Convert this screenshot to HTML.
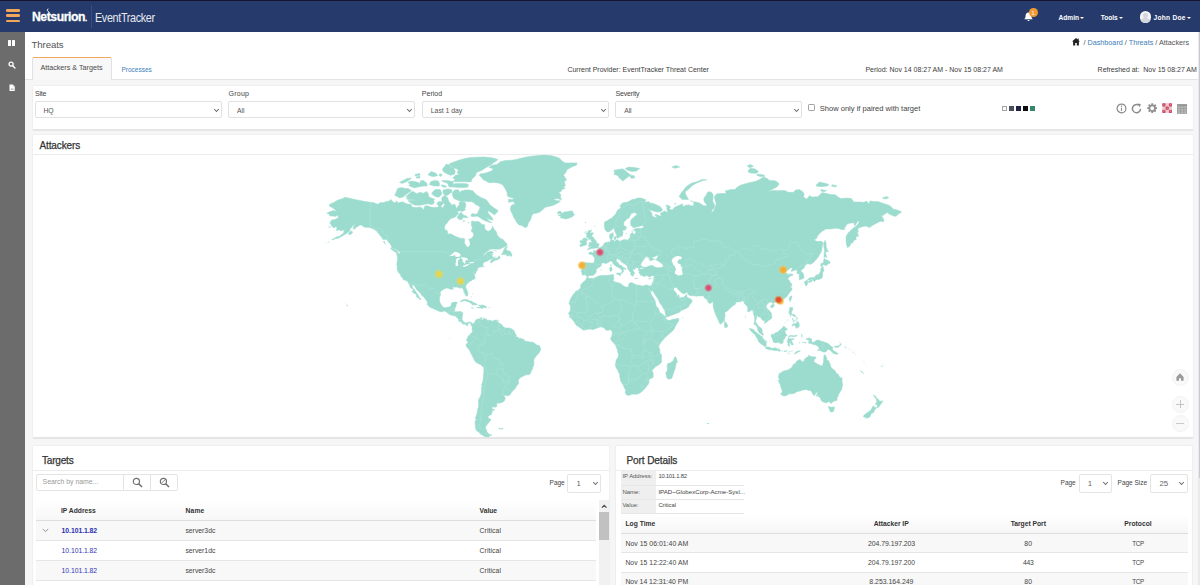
<!DOCTYPE html>
<html lang="en"><head>
<meta charset="utf-8">
<title>EventTracker - Threats</title>
<style>
*{box-sizing:border-box;margin:0;padding:0}
html,body{width:1200px;height:585px;overflow:hidden;background:#f6f6f6;font-family:"Liberation Sans",sans-serif;color:#444;}
.abs{position:absolute}
#nav{left:0;top:0;width:1200px;height:32px;background:#263b6b;border-top:1.5px solid #17142e}
#side{left:0;top:32px;width:25px;height:553px;background:#6c6c6c}
#head{left:25px;top:32px;width:1175px;height:48px;background:#fff;border-bottom:1px solid #e4e4e4}
.t{position:absolute;white-space:nowrap;line-height:1;font-size:7.6px;color:#444}
.b{font-weight:bold}
.lnk{color:#3d7db8}
.panel{position:absolute;background:#fff;border:1px solid #efefef;border-bottom:2px solid #e5e5e5;border-radius:2px}
.sel{position:absolute;background:#fff;border:1px solid #e1e1e1;border-radius:2px}
.chev{position:absolute;width:7px;height:5px}
.bar{position:absolute;left:5.5px;width:14.5px;height:2.6px;border-radius:1.2px;background:#f2a65c}
.row{position:absolute;left:0;height:20px}
.hl{position:absolute;height:1px;background:#e4e4e4}
.sq{position:absolute;top:105.9px;width:5px;height:5.4px}
.circ{position:absolute;width:17px;height:17px;border-radius:50%;background:#f9f9f9;border:1px solid #f3f3f3}
</style>
</head>
<body>
<!-- NAVBAR -->
<div id="nav" class="abs">
  <div class="bar" style="top:8.3px"></div>
  <div class="bar" style="top:13.3px"></div>
  <div class="bar" style="top:18.6px"></div>
  <div class="t b" style="left: 31.5px; top: 10.4px; font-size: 12.4px; color: rgb(255, 255, 255); letter-spacing: -0.45px; -webkit-text-stroke: 0.3px rgb(255, 255, 255); transform: scaleX(0.9845); transform-origin: 0px 0px;">Netsurion<span style="font-size:8px">.</span></div>
  <svg class="abs" style="left:45.6px;top:6.6px" width="6" height="6" viewBox="0 0 6 6"><path d="M2.2 0.6 L1.2 2.2 L3 4.4" fill="none" stroke="#fff" stroke-width="0.9"></path></svg>
  <div class="abs" style="left:91px;top:4px;width:1px;height:23px;background:#3a4f7e"></div>
  <div class="t" style="left: 94.8px; top: 9.6px; font-size: 13.6px; color: rgb(230, 234, 242); letter-spacing: -0.4px; transform: scaleX(0.7917); transform-origin: 0px 0px;">EventTracker</div>
  <!-- bell -->
  <svg class="abs" style="left:1023.5px;top:10.5px" width="9" height="10" viewBox="0 0 9 10"><path d="M4.5 0.6c-1.9 0-2.9 1.5-2.9 3.2 0 1.9-.6 2.7-1.3 3.4h8.4c-.7-.7-1.3-1.5-1.3-3.4 0-1.7-1-3.2-2.9-3.2zM3.4 7.9a1.1 1.1 0 0 0 2.2 0z" fill="#fff"></path></svg>
  <div class="abs" style="left:1028.5px;top:7.3px;width:9px;height:9px;border-radius:50%;background:#f19a35"></div>
  <div class="t" style="left:1031.6px;top:9.5px;font-size:5.5px;color:#fff">1</div>
  <div class="t b" style="left: 1058.5px; top: 13.7px; font-size: 6.59px; color: rgb(255, 255, 255); letter-spacing: 0.006px;">Admin</div>
  <div class="abs" style="left:1080.3px;top:16.2px;border:2.3px solid transparent;border-top:2.6px solid #fff;border-bottom:0"></div>
  <div class="t b" style="left: 1100.8px; top: 13.7px; font-size: 6.59px; color: rgb(255, 255, 255); letter-spacing: -0.052px;">Tools</div>
  <div class="abs" style="left:1119.4px;top:16.2px;border:2.3px solid transparent;border-top:2.6px solid #fff;border-bottom:0"></div>
  <div class="abs" style="left:1139.8px;top:10.2px;width:11.6px;height:11.6px;border-radius:50%;background:#f4f4f6;overflow:hidden">
     <div class="abs" style="left:3.6px;top:2px;width:4.4px;height:4.4px;border-radius:50%;background:#d4d6de"></div>
     <div class="abs" style="left:1.6px;top:7px;width:8.4px;height:7px;border-radius:50%;background:#d4d6de"></div>
  </div>
  <div class="t b" style="left: 1153.6px; top: 13.7px; font-size: 6.59px; color: rgb(255, 255, 255); letter-spacing: 0.254px;">John Doe</div>
  <div class="abs" style="left:1186.7px;top:16.2px;border:2.3px solid transparent;border-top:2.6px solid #fff;border-bottom:0"></div>
</div>
<!-- SIDEBAR -->
<div id="side" class="abs">
  <div class="abs" style="left:8.4px;top:8.3px;width:3px;height:6.2px;background:#fff;border-radius:.5px"></div>
  <div class="abs" style="left:12.2px;top:8.3px;width:3px;height:6.2px;background:#fff;border-radius:.5px"></div>
  <svg class="abs" style="left:7.9px;top:29.2px" width="8" height="8" viewBox="0 0 9 9"><circle cx="3.5" cy="3.5" r="2.3" fill="none" stroke="#fff" stroke-width="1.4"></circle><path d="M5.3 5.3L7.8 7.8" stroke="#fff" stroke-width="1.6" stroke-linecap="round"></path></svg>
  <svg class="abs" style="left:8.8px;top:51.6px" width="6.6" height="7.6" viewBox="0 0 8 9"><path d="M0.6 0.4h4l2.4 2.4v5.8h-6.4z" fill="#fff"></path><path d="M4.4 0.4v2.6h2.6" fill="#cfcfcf"></path><path d="M2 6.5l1.3-1.6 1 1 .8-.6 1 1.4z" fill="#8a8a8a"></path></svg>
</div>
<!-- HEADER (white) -->
<div id="head" class="abs"></div>
<div class="t" style="left: 31.5px; top: 39.68px; font-size: 9.63px; color: rgb(85, 85, 85); letter-spacing: -0.093px;">Threats</div>
<!-- breadcrumb -->
<svg class="abs" style="left:1072px;top:38.3px" width="8" height="7.4" viewBox="0 0 8 7.4"><path d="M4 0L0 3.6h1.1v3.8h2.1V4.9h1.6v2.5h2.1V3.6H8L6.7 2.4V.6H5.7v.9z" fill="#222"></path></svg>
<div class="t" style="left: 1083.4px; top: 38.93px; font-size: 7.24px; color: rgb(85, 85, 85); letter-spacing: 0.001px;">/ <span class="lnk">Dashboard</span> / <span class="lnk">Threats</span> / Attackers</div>
<!-- tabs -->
<div class="abs" style="left:31.5px;top:57px;width:80px;height:23px;background:#f8f8f8;border:1px solid #e2e2e2;border-top:1.3px solid #f1a85e;border-bottom:0;border-radius:2px 2px 0 0"></div>
<div class="t" style="left: 40.4px; top: 65.36px; font-size: 7.18px; color: rgb(74, 74, 74); letter-spacing: 0.002px;">Attackers &amp; Targets</div>
<div class="t lnk" style="left: 121.4px; top: 66.79px; font-size: 6.51px; letter-spacing: 0.005px;">Processes</div>
<div class="t" style="left: 567.4px; top: 66.1px; font-size: 7px; color: rgb(60, 60, 60); letter-spacing: -0.003px;">Current Provider: EventTracker Threat Center</div>
<div class="t" style="left: 865.4px; top: 66.1px; font-size: 7px; color: rgb(60, 60, 60); letter-spacing: -0.006px;">Period: Nov 14 08:27 AM - Nov 15 08:27 AM</div>
<div class="t" style="left: 1097.6px; top: 66.1px; font-size: 7px; color: rgb(60, 60, 60); letter-spacing: -0.014px;">Refreshed at:&nbsp; Nov 15 08:27 AM</div>

<!-- FILTER PANEL -->
<div class="panel" style="left:31.5px;top:85.4px;width:1162px;height:46px"></div>
<div class="t" style="left: 35px; top: 90.19px; font-size: 7.03px; letter-spacing: -0.198px;">Site</div>
<div class="sel" style="left:35px;top:101.2px;width:187px;height:17.3px"></div>
<div class="t" style="left: 43.4px; top: 107.79px; font-size: 6.83px; color: rgb(85, 85, 85); letter-spacing: 0px;">HQ</div>
<div class="t" style="left: 228.6px; top: 90.19px; font-size: 7.03px; letter-spacing: 0.2px;">Group</div>
<div class="sel" style="left:228.4px;top:101.2px;width:187px;height:17.3px"></div>
<div class="t" style="left: 237px; top: 107.79px; font-size: 6.83px; color: rgb(85, 85, 85); letter-spacing: -0.098px;">All</div>
<div class="t" style="left: 421.8px; top: 90.19px; font-size: 7.03px; letter-spacing: 0.003px;">Period</div>
<div class="sel" style="left:421.6px;top:101.2px;width:187.4px;height:17.3px"></div>
<div class="t" style="left: 430.8px; top: 107.79px; font-size: 6.83px; color: rgb(85, 85, 85); letter-spacing: -0.002px;">Last 1 day</div>
<div class="t" style="left: 615.4px; top: 90.19px; font-size: 7.03px; letter-spacing: -0.168px;">Severity</div>
<div class="sel" style="left:615.2px;top:101.2px;width:187px;height:17.3px"></div>
<div class="t" style="left: 624.2px; top: 107.79px; font-size: 6.83px; color: rgb(85, 85, 85); letter-spacing: -0.098px;">All</div>
<svg class="chev" style="left:212.5px;top:108.3px" viewBox="0 0 7 5"><path d="M1.2 1l2.3 2.5L5.8 1" fill="none" stroke="#6a6a6a" stroke-width="1.05"></path></svg>
<svg class="chev" style="left:406px;top:108.3px" viewBox="0 0 7 5"><path d="M1.2 1l2.3 2.5L5.8 1" fill="none" stroke="#6a6a6a" stroke-width="1.05"></path></svg>
<svg class="chev" style="left:599.5px;top:108.3px" viewBox="0 0 7 5"><path d="M1.2 1l2.3 2.5L5.8 1" fill="none" stroke="#6a6a6a" stroke-width="1.05"></path></svg>
<svg class="chev" style="left:793px;top:108.3px" viewBox="0 0 7 5"><path d="M1.2 1l2.3 2.5L5.8 1" fill="none" stroke="#6a6a6a" stroke-width="1.05"></path></svg>
<div class="abs" style="left:808.4px;top:104.4px;width:7px;height:7px;border:1px solid #a2a2a2;border-radius:1.2px;background:#fff"></div>
<div class="t" style="left: 819.8px; top: 104.68px; font-size: 7.54px; color: rgb(68, 68, 68); letter-spacing: 0.001px;">Show only if paired with target</div>
<!-- colour squares -->
<div class="sq" style="left:1002.2px;background:#fff;border:.8px solid #a5a5a5"></div>
<div class="sq" style="left:1009.1px;background:#4b4f5b"></div>
<div class="sq" style="left:1016.1px;background:#1e2148"></div>
<div class="sq" style="left:1022.9px;background:#0d0d12"></div>
<div class="sq" style="left:1029.5px;background:#37876c"></div>
<!-- toolbar icons -->
<svg class="abs" style="left:1115.6px;top:103px" width="11" height="11" viewBox="0 0 11 11"><circle cx="5.5" cy="5.4" r="4.4" fill="none" stroke="#8b8b8b" stroke-width="1.25"></circle><path d="M5.5 4.7v3.1" stroke="#8b8b8b" stroke-width="1.2"></path><circle cx="5.5" cy="3.2" r=".75" fill="#8b8b8b"></circle></svg>
<svg class="abs" style="left:1130.8px;top:103px" width="11" height="11" viewBox="0 0 11 11"><path d="M9.6 5.9A4.1 4.1 0 1 1 7.7 2.2" fill="none" stroke="#8b8b8b" stroke-width="1.45"></path><path d="M6.4 0.5l3.5.5-1.2 3.3z" fill="#8b8b8b"></path></svg>
<svg class="abs" style="left:1146.7px;top:103.2px" width="10.4" height="10.4" viewBox="0 0 11 11"><circle cx="5.5" cy="5.5" r="3" fill="none" stroke="#8f8f8f" stroke-width="1.9"></circle><g stroke="#8f8f8f" stroke-width="1.9"><path d="M5.5 .3v2M5.5 8.7v2M.3 5.5h2M8.7 5.5h2M1.8 1.8l1.4 1.4M7.8 7.8l1.4 1.4M1.8 9.2l1.4-1.4M7.8 3.2l1.4-1.4"></path></g></svg>
<svg class="abs" style="left:1161.8px;top:102.8px" width="10.4" height="10.4" viewBox="0 0 11 11"><rect x=".2" y=".2" width="10.6" height="10.6" fill="#e6cdd2"></rect><g fill="#dc93a1"><rect x=".2" y=".2" width="3.6" height="3.6"></rect><rect x="7.2" y=".2" width="3.6" height="3.6"></rect><rect x=".2" y="7.2" width="3.6" height="3.6"></rect><rect x="7.2" y="7.2" width="3.6" height="3.6"></rect><rect x="3.7" y="3.7" width="3.6" height="3.6"></rect></g><g fill="none" stroke="#d2465f" stroke-width="1.1"><circle cx="2" cy="2" r="1.1"></circle><circle cx="9" cy="2" r="1.1"></circle><circle cx="2" cy="9" r="1.1"></circle><circle cx="9" cy="9" r="1.1"></circle><circle cx="5.5" cy="5.5" r="1.2"></circle></g></svg>
<svg class="abs" style="left:1177.1px;top:103.8px" width="10.2" height="9.8" viewBox="0 0 11 10.5"><rect x=".2" y=".2" width="10.6" height="10.1" fill="#bdbdbd"></rect><rect x=".2" y=".2" width="10.6" height="2.3" fill="#959595"></rect><g stroke="#9b9b9b" stroke-width=".9"><path d="M.2 4.9h10.6M.2 7.5h10.6M.6 .2v10.1M3.9 .2v10.1M7.3 .2v10.1M10.4 .2v10.1M.2 10h10.6"></path></g></svg>

<!-- ATTACKERS PANEL -->
<div class="panel" style="left:31.5px;top:134px;width:1162px;height:305px;overflow:hidden">
  <div class="hl" style="left:0;top:19.4px;width:1162px;background:#ececec"></div>
</div>
<div class="t" style="left: 39.4px; top: 140.9px; font-size: 10px; color: rgb(51, 51, 51); letter-spacing: -0.102px; -webkit-text-stroke: 0.25px rgb(51, 51, 51);">Attackers</div>
<svg class="abs" style="left:32.5px;top:155px" width="1160" height="282" viewBox="0 0 1160 282"><path d="M459.1 67.7L456.7 67.4L454.3 66.6L451.3 65.4L448.7 63.9L446.3 62.2L443.9 61.1L441.5 61.6L438.6 61.4L437.8 59.8L439.4 58.6L442.3 59.2L444.7 58.5L445.3 56.1L446.6 54.0L447.0 52.1L444.7 50.4L442.3 49.3L440.5 47.6L438.3 46.5L435.9 46.7L432.7 46.3L427.9 46.2L424.7 45.3L421.0 43.6L419.4 40.6L419.7 37.6L421.4 35.1L425.5 34.7L426.6 37.6L428.2 36.1L431.9 35.0L435.9 35.0L439.9 35.7L441.2 37.6L443.9 40.0L446.3 41.5L449.0 43.0L451.9 44.1L453.8 45.3L455.5 47.6L456.4 49.3L459.1 51.5L461.5 53.2L465.1 55.6L464.0 57.5L461.4 60.1L458.7 58.0L455.9 56.1L454.5 56.7L455.9 59.0L458.2 61.6L459.6 63.4L459.8 65.2L457.5 64.7L453.5 63.0L455.1 64.9L457.2 66.7ZM428.7 57.5L426.7 58.3L425.5 60.1L423.9 62.2L425.1 63.4L426.3 64.7L429.0 64.4L430.3 62.2L432.7 62.7L434.8 62.9L433.5 61.1L431.1 60.3L429.5 59.3ZM375.3 46.2L378.1 48.2L381.4 50.1L385.4 50.3L388.6 50.1L391.8 49.3L394.9 48.7L398.2 49.6L400.3 49.0L401.4 47.0L400.6 45.6L401.6 44.1L399.0 43.3L395.8 41.8L395.0 37.9L393.4 36.4L390.2 38.5L388.6 37.6L386.2 37.6L383.8 38.8L380.5 36.7L379.7 36.2L376.5 38.2L373.7 40.9L372.7 42.1L374.9 42.4L378.1 41.8L373.3 43.6L374.9 44.4L383.8 45.0L375.3 45.6ZM361.6 40.3L362.9 37.9L363.7 35.4L365.0 33.2L368.5 32.6L372.5 33.6L375.3 33.6L378.5 35.7L375.7 37.6L372.5 40.0L370.6 41.8L366.4 43.0L365.3 42.1L362.4 40.5ZM375.7 30.4L381.4 32.9L386.2 31.7L391.0 31.0L394.2 31.0L393.7 28.1L390.2 25.4L387.0 26.1L387.8 28.4L383.0 26.8L378.1 26.1L374.9 27.4L377.3 29.4ZM366.4 27.4L369.3 28.4L373.3 26.8L377.3 24.4L378.1 23.1L374.1 23.4L370.1 25.4ZM396.6 29.7L401.4 31.0L406.2 31.0L406.7 29.1L405.4 26.1L401.4 25.4L397.4 26.8ZM408.6 29.7L413.4 31.0L413.4 32.0L410.2 32.3L408.6 31.0ZM408.6 25.4L415.8 25.8L419.8 26.4L420.6 29.4L422.3 28.4L428.7 28.4L433.5 28.7L435.6 29.7L434.6 32.3L431.1 32.6L425.5 32.6L420.6 32.0L416.2 32.0L415.5 30.4L414.2 28.1L410.2 26.8ZM410.2 35.1L414.2 33.9L418.6 34.5L419.0 37.3L416.6 38.5L415.0 40.3L411.8 40.3L410.2 38.5L409.9 36.7ZM399.0 37.6L402.2 34.5L407.0 34.5L408.6 37.3L408.5 39.4L406.2 42.1L403.8 42.1L400.6 40.6L398.7 38.8ZM403.8 49.0L405.4 46.5L408.6 46.7L410.5 48.4L408.6 50.4L405.4 50.7ZM419.8 26.4L423.1 26.8L428.7 26.8L433.5 26.8L435.9 27.1L438.6 26.4L438.6 24.4L442.3 21.0L443.6 17.5L449.5 15.0L452.7 12.8L457.5 10.2L459.9 8.3L464.0 5.6L464.8 4.4L459.1 2.8L451.1 2.0L443.1 2.2L435.1 2.8L427.1 4.8L422.3 6.4L417.4 8.3L415.8 9.4L417.4 11.7L423.9 13.9L425.5 15.4L423.9 17.5L426.3 19.3L422.3 20.3L419.8 23.1L422.3 24.4ZM409.4 14.3L413.4 9.1L417.4 10.9L420.6 12.8L422.3 16.4L421.4 19.3L417.4 20.3L414.2 18.9L410.2 16.4ZM395.0 19.6L398.2 16.4L403.0 18.2L404.6 20.7L399.8 21.7L395.8 20.3ZM407.0 18.6L409.4 20.0L407.8 21.4L405.9 20.3ZM382.2 19.3L387.0 18.6L387.0 20.3L382.2 21.0ZM383.8 21.4L387.0 21.4L387.0 23.1L383.0 23.1ZM493.0 72.8L490.4 71.8L488.8 70.4L486.1 69.9L483.7 67.4L482.4 64.9L480.5 61.9L479.5 59.3L477.3 54.8L477.6 51.8L479.2 49.8L481.6 49.6L481.6 48.2L480.0 46.5L475.3 47.3L475.7 45.3L475.8 44.1L479.2 44.7L480.8 43.3L477.6 42.4L474.4 41.2L474.2 37.9L472.8 34.8L471.2 32.3L469.6 29.7L465.6 28.1L460.7 27.4L455.9 27.8L453.0 26.1L450.3 24.8L448.7 22.7L446.3 20.3L447.1 18.9L452.7 17.9L459.1 15.7L459.9 13.5L455.9 12.4L459.1 10.2L464.0 9.4L467.2 6.8L472.0 5.6L478.4 5.2L483.2 4.4L489.6 2.8L496.0 1.6L505.7 0.4L511.3 -0.2L518.5 0.8L523.3 2.0L526.5 3.2L529.7 6.4L532.1 7.9L539.3 7.9L544.2 7.9L543.4 10.2L539.3 11.7L536.1 13.5L533.7 15.0L532.9 17.5L530.5 20.3L532.1 22.4L533.7 25.1L531.3 26.4L531.8 28.4L532.4 30.4L530.5 32.3L532.4 33.2L528.9 34.5L528.1 36.4L525.7 37.6L528.1 39.7L527.3 41.8L528.6 44.7L524.1 43.6L520.1 44.4L523.3 45.6L527.6 45.9L525.7 47.6L522.5 49.3L519.3 50.7L515.3 51.5L512.1 52.3L509.7 54.8L506.5 57.2L503.3 58.3L500.0 58.8L498.4 61.4L498.1 63.7L496.8 65.7L495.2 68.4L494.6 70.9ZM524.1 58.5L525.2 56.7L527.3 56.0L529.2 58.5L531.0 56.9L533.7 56.8L537.4 55.9L540.0 56.4L540.0 58.0L541.7 59.6L539.7 61.6L536.9 62.8L533.2 63.9L530.5 63.4L527.2 62.8L528.1 61.6L524.9 60.2L528.1 59.8L527.3 58.8ZM427.1 146.7L428.2 145.6L430.0 144.8L431.4 144.5L433.2 144.5L434.8 144.8L436.4 145.8L438.3 145.9L439.7 147.1L441.5 147.9L443.1 148.6L444.5 149.4L443.1 150.0L441.2 149.8L438.8 150.0L439.6 149.0L438.0 148.6L437.5 148.1L435.9 147.0L434.3 146.4L433.2 146.1L431.7 145.8L429.8 146.1L428.7 146.6ZM444.0 152.5L444.4 152.0L446.3 152.4L447.4 152.2L446.6 151.3L445.7 150.0L447.6 150.2L449.5 150.0L451.3 150.4L452.2 151.0L453.2 151.5L453.8 152.1L453.2 152.8L451.3 152.4L450.2 152.8L448.9 153.8L448.2 153.0L446.5 152.9L445.0 153.0ZM468.3 99.6L469.7 97.8L470.4 95.7L471.5 93.4L472.5 91.9L474.4 91.3L473.6 93.0L472.5 94.7L474.1 94.9L475.2 96.1L476.9 95.9L477.6 97.2L478.2 97.4L477.1 98.6L478.6 98.4L479.0 99.8L478.2 101.5L476.9 101.0L476.5 99.8L475.2 101.0L473.7 101.0L474.1 99.8L472.0 99.6ZM357.5 93.1L359.2 93.3L362.4 94.7L364.5 96.3L365.5 97.9L363.4 97.7L361.6 96.7L360.2 95.5L358.4 94.5ZM315.4 78.2L316.7 77.1L318.8 75.9L319.6 77.3L319.1 78.4L317.5 79.5L315.9 79.8ZM293.8 58.3L296.7 56.7L300.7 55.6L303.7 56.4L301.6 54.2L299.1 52.6L295.9 50.8L296.8 49.3L301.2 47.3L304.4 45.3L308.4 43.9L312.4 42.2L318.0 43.6L322.8 44.7L326.0 45.3L330.8 46.2L337.2 47.2L340.4 47.5L344.5 49.3L347.7 47.6L350.1 47.7L353.3 46.5L355.7 46.2L358.1 44.4L359.7 46.7L362.1 47.9L363.4 45.9L365.3 47.9L369.3 46.7L374.1 49.0L378.1 49.3L378.9 52.1L383.8 52.6L387.0 51.9L389.4 53.2L390.2 55.3L391.3 52.9L391.8 51.0L395.0 50.7L396.6 51.8L400.6 52.6L404.6 52.3L406.2 50.7L407.8 50.4L409.4 53.4L410.5 51.5L411.8 49.6L409.1 46.7L408.6 42.7L411.8 40.3L414.6 42.7L415.8 46.2L417.0 47.6L418.7 50.1L421.9 49.3L423.4 53.4L426.1 50.1L426.3 47.3L427.9 46.6L431.9 47.0L432.8 49.0L432.7 51.8L431.6 53.7L432.8 54.5L429.5 56.4L426.3 55.9L424.5 56.4L425.5 58.5L423.1 61.1L421.4 62.4L418.2 63.4L415.8 65.4L414.2 67.9L412.3 69.9L411.5 72.3L412.1 75.2L414.1 75.3L415.0 79.3L417.4 78.7L422.9 81.6L427.1 83.2L431.4 83.4L431.6 86.1L431.4 88.3L432.7 90.0L434.0 91.9L435.7 92.1L437.0 90.0L437.0 87.8L436.7 85.9L435.6 84.5L438.9 83.0L440.5 80.7L440.5 78.2L438.1 75.9L439.1 73.5L439.3 72.1L438.3 70.4L438.6 68.4L438.1 66.7L439.1 66.1L442.0 66.7L445.2 66.3L447.9 68.2L448.7 69.4L451.6 69.8L451.8 72.3L451.8 74.0L453.7 75.6L455.1 76.3L457.5 75.2L458.8 73.3L459.6 71.3L460.7 73.5L461.9 74.9L463.2 76.8L464.4 80.3L466.7 83.0L468.8 83.9L470.4 84.8L471.3 85.9L472.0 87.0L473.9 88.7L474.1 90.2L471.8 91.7L468.8 93.0L467.2 94.1L464.3 94.2L461.4 94.1L456.9 94.2L455.3 96.1L454.0 96.5L451.6 98.5L449.8 100.8L451.1 100.4L453.5 97.9L455.1 97.1L458.3 96.2L460.4 97.2L460.3 98.0L458.3 98.7L456.9 98.8L458.2 99.5L459.8 99.0L459.1 100.6L459.5 102.0L460.4 102.5L461.5 103.2L462.8 103.4L464.1 103.1L464.9 103.5L465.1 102.2L465.7 101.2L466.4 100.8L466.7 101.8L467.4 102.8L466.0 103.7L465.6 104.2L464.0 104.9L461.5 105.6L460.1 106.4L458.2 108.0L457.2 107.2L457.9 105.6L459.5 104.4L460.1 103.4L458.8 103.8L457.4 104.4L455.8 104.6L455.9 105.2L454.0 106.2L452.7 106.6L450.8 107.5L450.0 108.7L450.2 109.4L449.5 110.0L450.2 110.8L451.1 111.1L451.1 111.5L450.1 111.7L448.9 111.8L447.9 112.0L446.3 112.2L444.9 113.1L444.7 113.7L444.5 115.0L444.1 115.7L443.2 116.5L442.3 115.7L442.9 116.8L443.0 117.7L442.5 118.5L441.6 119.9L441.3 118.3L440.9 116.0L440.7 118.3L441.0 120.1L441.5 120.3L442.0 122.0L442.3 123.3L440.7 124.4L439.3 124.7L438.4 125.9L436.8 126.1L436.4 127.0L435.2 127.8L433.6 129.2L432.8 130.9L432.8 132.0L433.0 132.9L433.6 134.5L434.2 135.4L434.6 137.1L435.0 138.4L434.9 140.0L434.4 141.0L433.3 141.2L432.2 139.6L431.7 138.6L430.8 136.7L430.6 135.7L430.2 134.3L429.3 132.9L428.3 132.5L427.1 133.4L426.4 133.2L425.9 132.4L423.5 132.1L422.3 132.2L420.8 132.0L419.7 132.4L420.0 133.6L420.5 134.5L419.8 134.2L418.9 134.2L417.8 134.3L417.0 133.9L415.7 133.4L413.8 133.1L412.9 133.2L411.3 133.9L410.5 134.5L408.9 135.5L407.5 136.7L407.2 137.9L407.6 139.7L406.9 141.4L406.5 143.1L406.6 144.9L406.5 146.0L407.3 148.1L408.0 149.3L409.2 151.1L409.7 152.0L411.0 152.2L412.0 152.9L413.4 152.5L414.7 152.1L416.2 152.0L417.1 151.5L417.9 150.8L418.2 150.0L418.4 148.8L418.6 148.0L419.6 147.6L421.9 147.1L423.7 147.1L424.3 147.9L423.7 148.8L423.1 149.5L423.1 150.6L422.7 152.0L422.1 152.5L422.1 153.1L421.9 153.9L421.8 155.6L420.8 156.6L421.3 156.8L422.3 156.7L424.2 156.7L425.5 156.5L427.1 156.6L428.2 156.7L430.0 158.1L429.6 159.7L429.3 161.3L429.1 163.0L429.1 164.7L430.2 166.2L430.9 166.9L431.5 167.3L432.2 167.8L433.2 168.1L434.0 167.7L435.2 167.2L435.7 166.9L436.7 166.9L437.5 167.2L438.5 167.8L439.3 168.3L440.1 169.4L440.3 168.5L440.9 168.0L441.5 167.3L442.1 166.9L442.3 165.6L443.3 164.4L444.4 164.2L445.8 164.1L446.5 163.7L448.5 162.2L449.4 162.8L449.0 163.3L448.0 164.4L448.6 164.7L449.5 164.6L450.6 163.9L450.8 163.6L451.1 162.6L451.4 163.4L451.8 163.8L453.7 164.3L454.0 164.7L454.3 165.4L456.0 165.2L457.5 165.3L458.8 166.0L459.6 166.0L460.4 165.5L461.5 165.2L463.2 165.1L464.1 165.0L463.2 165.7L463.5 166.2L464.6 166.4L465.7 167.2L465.9 168.5L467.2 168.6L468.8 169.6L469.7 171.2L471.2 172.2L471.8 172.8L473.6 172.9L474.9 172.9L476.8 173.0L479.5 174.4L480.5 175.2L481.1 175.6L481.8 177.8L482.6 178.9L483.4 180.5L482.4 181.8L484.0 181.8L485.8 182.7L485.6 184.6L486.6 183.3L487.5 183.3L489.6 184.1L491.2 184.7L492.0 186.6L493.6 186.2L495.2 186.5L496.4 187.0L498.4 186.9L500.0 187.3L501.6 188.3L503.3 189.5L504.1 190.2L506.5 190.6L506.9 191.6L507.6 193.8L507.5 195.2L506.1 197.8L505.0 199.2L504.0 199.9L503.3 201.0L501.6 203.3L500.8 204.7L500.8 206.2L501.0 208.2L500.8 208.9L500.5 211.0L499.7 212.3L499.6 214.1L498.8 215.3L497.7 217.1L497.7 218.2L496.0 219.7L494.1 219.8L492.0 220.0L490.6 221.2L489.1 221.5L487.2 222.9L485.8 224.1L485.4 225.3L485.6 227.7L485.3 229.3L483.7 230.7L482.9 232.2L482.1 233.7L480.8 235.1L479.8 235.7L477.7 238.6L477.1 239.7L475.3 240.8L473.3 240.6L470.6 239.9L469.7 239.0L469.8 240.1L471.3 240.8L471.7 241.6L471.4 242.6L472.5 243.3L471.1 246.3L469.2 247.4L467.2 248.0L464.8 248.2L463.6 247.9L463.8 249.1L463.8 251.0L463.5 251.8L461.1 252.3L459.1 251.6L459.0 252.9L459.3 254.3L461.1 254.1L461.4 255.1L460.3 255.5L459.1 255.2L459.3 256.4L458.7 258.4L458.2 259.8L456.7 260.2L455.1 261.5L455.0 262.6L456.7 264.0L457.9 264.2L457.7 265.3L455.9 267.2L455.0 268.5L453.7 270.1L452.6 271.8L452.4 273.3L453.8 274.9L453.4 275.6L454.8 278.1L456.7 279.4L459.0 280.0L458.3 280.6L456.3 280.8L455.5 282.9L453.5 281.9L451.1 281.2L448.7 279.8L447.1 278.7L445.8 277.0L443.6 275.8L442.6 273.1L442.3 271.0L442.1 267.9L442.1 265.8L443.9 264.8L442.1 263.4L442.9 261.8L443.6 259.8L444.1 257.8L444.4 256.4L444.5 253.9L445.0 253.5L445.2 253.1L445.7 249.8L445.5 247.3L445.3 245.6L445.3 244.8L446.2 244.0L446.8 242.3L447.6 240.8L448.2 239.0L448.5 238.3L448.5 237.3L448.6 235.4L448.4 232.8L449.0 231.8L448.7 230.1L449.0 228.4L449.8 226.8L450.1 225.0L450.3 223.9L450.5 220.9L450.2 220.0L450.8 218.3L450.9 215.1L450.6 212.3L449.0 210.9L447.9 209.8L445.5 208.7L442.8 207.2L441.0 204.7L441.2 204.4L439.7 201.7L438.9 200.2L437.3 196.9L436.6 195.4L435.2 193.4L433.6 192.1L433.2 191.6L433.3 190.5L433.0 189.8L433.4 188.9L434.4 187.9L434.9 187.4L435.2 186.5L434.6 186.5L433.5 185.8L433.9 183.8L434.4 182.9L435.0 182.2L434.9 181.3L435.6 180.7L436.8 180.3L437.0 179.4L437.8 178.3L438.9 178.1L439.7 176.1L439.2 175.4L439.0 173.5L439.3 172.2L438.5 170.7L438.1 170.2L437.6 169.4L437.9 168.8L436.8 168.1L435.9 167.9L435.5 168.5L434.8 169.0L434.4 169.1L435.1 170.2L434.4 170.7L433.6 170.7L433.3 170.1L432.4 169.4L431.6 169.0L430.4 169.4L430.0 168.5L429.1 168.8L429.1 168.3L428.3 167.1L427.6 166.8L427.3 166.3L426.9 166.9L425.9 166.2L425.7 165.6L425.8 164.7L425.7 164.2L424.7 163.4L423.5 162.1L422.7 161.5L423.2 161.2L422.6 161.0L421.4 161.1L420.2 160.5L419.3 160.4L417.8 159.9L415.5 158.9L415.2 158.6L412.9 156.6L410.7 156.1L408.6 157.0L407.7 156.7L405.4 155.9L403.2 155.0L400.5 153.7L399.5 153.2L397.4 152.6L396.1 151.4L395.0 150.6L393.9 149.1L394.6 148.7L394.2 148.1L394.5 147.2L392.7 144.4L391.1 142.6L389.7 141.0L388.5 140.3L387.8 138.4L385.5 136.4L383.8 134.8L382.6 132.9L381.3 130.4L379.3 129.5L379.2 130.9L379.6 132.7L381.4 134.5L382.5 136.2L383.3 137.4L383.8 138.1L384.8 139.6L385.8 141.4L386.5 142.8L387.3 143.1L387.9 144.0L387.1 145.0L386.6 144.0L385.4 142.9L383.6 142.0L383.4 140.5L383.3 139.5L381.7 138.4L381.2 138.4L380.2 137.7L378.8 136.5L380.4 136.1L380.1 134.8L379.4 133.8L377.8 133.1L377.3 132.0L376.9 130.9L376.3 129.4L375.5 128.2L375.3 127.7L375.1 127.0L374.3 126.3L373.5 126.0L373.3 125.6L372.4 125.4L371.4 124.9L370.2 124.8L370.0 123.5L369.6 123.1L367.9 121.4L367.9 120.9L367.7 120.2L366.9 118.6L366.1 118.3L365.0 116.6L363.9 113.7L364.3 112.6L364.2 111.2L363.6 109.1L364.0 108.0L364.4 105.6L364.5 102.3L364.3 100.9L363.4 98.0L365.5 98.5L366.5 98.5L367.1 100.0L367.1 98.4L366.9 97.3L365.8 96.1L364.5 95.3L363.6 95.0L362.6 94.0L360.5 93.4L358.9 92.6L358.4 92.2L358.3 90.4L357.9 90.1L356.6 88.3L355.7 87.2L354.4 85.4L354.2 84.4L353.3 84.5L349.9 84.5L348.6 81.8L347.4 81.2L346.3 79.2L344.6 77.4L344.2 76.6L342.2 74.9L339.2 73.4L336.4 72.4L332.6 72.3L331.6 72.3L329.6 71.0L328.4 70.1L326.8 69.9L325.7 70.9L323.7 72.1L322.0 73.7L319.8 74.2L320.4 73.3L320.7 71.0L323.0 69.4L321.2 69.9L319.9 70.6L318.8 72.3L317.5 73.7L316.6 74.0L317.2 75.4L315.9 76.8L314.0 78.0L312.4 79.3L309.3 80.9L307.6 82.1L306.0 83.0L304.4 83.4L302.4 83.6L301.3 84.2L298.9 85.0L299.5 84.0L302.0 83.0L303.6 81.8L305.9 81.6L308.4 79.8L309.0 79.5L310.5 78.0L310.9 76.6L311.6 75.3L310.8 75.2L309.2 75.3L308.5 76.1L306.1 74.7L304.7 75.5L303.3 75.5L303.9 74.2L303.6 72.6L303.1 71.6L301.2 72.8L300.2 72.7L298.7 71.1L298.1 69.7L297.0 68.6L297.0 67.9L297.8 66.2L299.1 64.7L301.2 64.8L303.4 63.7L305.5 62.7L304.8 61.5L304.9 60.0L303.1 60.9L302.3 61.6L300.7 61.0L298.1 61.1L296.3 60.6L296.5 59.2ZM604.8 43.0L607.8 43.0L610.7 44.1L613.3 45.0L611.2 46.7L613.9 47.0L615.5 46.5L617.1 47.9L620.3 48.4L623.5 49.8L627.1 51.5L629.5 54.5L629.2 55.6L627.6 56.7L624.4 57.1L620.3 56.1L617.1 55.1L615.5 54.2L617.9 56.7L618.9 58.5L619.2 61.1L621.9 62.4L624.5 62.7L623.1 61.4L621.9 60.3L622.7 59.4L625.2 60.2L627.2 60.9L628.4 61.0L627.6 59.0L627.2 58.3L630.0 56.9L631.6 55.9L633.2 56.7L634.3 57.5L634.5 55.9L633.8 54.0L634.0 52.3L632.9 50.0L636.4 50.7L637.5 52.3L636.4 53.7L638.0 54.8L639.9 54.5L641.2 52.6L644.4 51.0L648.4 49.3L650.0 49.1L649.2 51.0L650.8 51.2L652.4 50.4L655.6 49.8L658.0 50.7L659.6 51.0L660.9 49.3L660.4 46.7L662.8 47.0L666.9 48.2L670.1 50.4L673.0 51.0L673.8 49.6L671.7 47.6L670.7 44.7L671.2 42.4L673.3 40.3L674.1 37.9L675.7 36.7L678.1 37.0L680.2 39.7L680.0 43.3L679.7 46.2L681.3 49.0L681.8 51.8L679.4 55.1L678.1 56.4L680.2 56.7L681.3 54.0L682.9 50.1L683.1 47.9L682.1 45.3L681.3 41.8L683.7 38.8L687.7 38.5L690.9 38.5L693.0 38.5L692.5 35.7L698.1 34.5L702.1 34.5L703.7 32.6L707.8 30.0L713.4 28.4L717.4 27.4L722.2 26.4L726.2 24.8L728.6 23.1L730.7 22.0L734.2 23.4L736.6 25.4L742.2 25.8L745.4 27.8L745.9 29.4L743.8 32.0L739.0 34.5L735.0 36.7L739.8 35.4L745.4 35.7L747.9 35.4L752.7 35.7L755.1 37.3L757.5 37.3L760.7 37.3L762.3 35.1L766.3 34.5L769.5 36.4L771.1 38.8L770.8 40.9L770.2 41.4L772.7 43.6L773.5 43.9L775.9 41.8L776.2 40.5L779.1 42.1L782.3 41.8L784.7 41.8L787.2 39.4L789.1 37.6L793.6 38.5L797.6 39.4L802.4 39.7L804.8 42.1L808.0 43.6L813.6 43.0L818.4 43.6L820.8 47.0L824.0 47.0L827.3 47.0L830.5 47.3L833.7 46.2L836.1 49.0L836.6 47.0L837.0 45.9L840.9 46.5L845.7 46.7L848.9 47.9L853.1 49.3L856.9 50.7L860.9 54.5L861.7 54.2L864.9 55.3L868.5 56.8L868.6 57.2L866.5 58.3L864.1 60.3L862.9 61.4L859.3 60.6L855.3 58.5L853.7 57.2L852.9 58.5L849.7 60.6L848.1 60.5L849.7 62.4L850.8 65.2L850.7 66.8L847.3 66.2L844.1 67.9L840.1 70.1L836.6 72.6L832.9 71.1L829.7 71.6L828.1 72.3L825.6 72.8L824.8 74.7L825.3 77.0L824.0 77.5L825.2 79.3L825.3 81.4L823.2 81.2L822.9 83.9L823.4 84.4L820.8 85.4L819.9 87.8L817.9 88.3L817.3 90.4L814.7 92.8L813.6 90.4L813.0 86.1L813.1 81.6L814.9 78.2L816.8 76.6L819.7 73.5L823.1 71.3L825.2 68.7L826.4 66.4L824.8 66.2L823.2 68.7L821.6 70.9L820.8 67.7L816.8 68.2L814.4 68.7L812.0 72.3L811.2 73.5L812.3 74.2L808.8 74.7L805.3 73.4L802.4 73.3L797.6 74.0L793.1 73.9L789.6 75.9L786.4 78.7L784.7 80.7L783.1 83.9L780.7 84.8L783.1 86.1L785.5 86.5L788.0 86.1L789.9 87.6L790.0 88.3L789.2 91.5L788.8 94.7L788.4 96.8L786.4 99.8L785.5 101.8L783.9 103.8L782.0 105.8L779.9 108.0L777.0 109.4L775.0 108.6L773.2 109.5L771.9 110.7L771.4 112.6L769.2 114.5L768.1 114.9L767.8 116.1L769.3 117.3L770.6 119.2L771.0 122.0L770.5 123.6L768.2 124.3L766.3 124.9L766.3 122.3L766.1 120.5L766.5 119.3L764.7 118.8L763.6 118.1L764.4 117.0L763.9 115.5L762.8 114.7L760.7 115.5L758.4 116.6L758.3 115.5L759.4 113.6L758.8 112.8L757.5 113.0L755.6 114.6L753.5 116.2L752.3 116.5L752.0 117.3L753.5 118.3L754.4 118.6L754.3 119.8L755.7 119.4L757.1 118.6L758.1 119.1L759.3 119.2L760.1 119.4L759.9 120.3L757.5 120.9L756.4 121.9L754.8 123.8L754.9 124.2L756.4 125.4L757.3 127.4L758.4 128.6L758.9 130.1L758.8 130.9L757.5 131.7L756.8 132.1L758.9 132.9L759.1 134.1L758.4 135.7L757.3 136.4L756.4 137.9L755.6 139.1L755.2 139.6L754.3 141.0L753.8 141.7L752.8 142.3L751.5 143.7L750.7 144.3L748.7 145.3L746.6 145.9L745.6 145.4L745.5 146.2L743.8 146.9L742.2 147.3L740.6 147.8L740.5 149.1L740.2 149.4L739.5 148.5L739.4 147.3L738.4 147.4L737.3 147.1L736.6 147.3L734.7 148.5L734.2 149.5L733.3 150.6L733.0 152.0L734.2 153.5L734.5 153.9L736.1 155.5L737.0 156.3L738.1 157.6L738.6 160.1L738.9 161.7L738.6 163.2L738.2 163.7L736.8 164.7L735.2 165.6L734.5 166.4L733.7 167.2L731.4 168.5L731.6 167.0L731.9 166.2L730.9 165.6L729.4 165.2L728.4 163.4L727.8 162.8L727.0 162.1L725.9 161.9L725.2 161.9L725.2 161.5L724.6 160.5L723.8 160.7L723.7 162.0L723.5 163.3L722.7 165.4L722.7 167.3L723.8 168.5L724.0 168.8L724.8 170.7L725.9 171.2L726.8 172.0L727.4 172.4L728.8 173.7L729.3 175.6L729.2 176.2L729.4 177.8L730.0 178.4L730.6 180.1L729.9 180.3L729.2 179.9L728.0 179.1L727.4 178.8L726.7 178.3L726.0 177.5L725.1 175.9L724.4 173.6L724.3 172.5L723.8 171.7L722.8 170.4L722.0 169.4L721.1 169.6L721.1 168.6L721.6 166.3L721.6 162.2L720.7 159.7L720.3 157.7L719.9 155.6L718.8 154.9L717.9 155.6L716.4 156.7L715.0 156.6L714.5 156.4L714.8 153.9L714.7 152.3L713.7 151.0L712.4 149.5L711.4 148.4L710.9 147.4L710.6 145.9L709.2 145.4L708.6 146.4L707.0 146.8L705.0 146.9L703.7 147.1L702.9 147.3L702.6 148.6L702.5 149.3L701.1 150.1L699.6 151.0L697.0 153.6L695.4 154.8L695.2 155.6L693.6 156.2L693.2 156.9L691.9 157.2L691.9 159.0L692.2 161.2L691.5 163.0L691.5 165.7L690.4 165.9L690.1 167.2L688.7 168.1L687.8 169.3L686.7 168.6L685.7 166.3L684.9 164.2L683.5 161.5L682.3 158.4L681.8 157.2L681.0 154.8L680.2 151.5L680.0 150.0L680.2 149.1L680.0 148.0L679.7 146.1L679.2 146.9L677.3 148.6L676.2 148.3L675.0 147.0L674.0 146.0L676.2 144.9L674.6 145.1L673.3 144.3L672.8 143.6L671.7 143.2L670.8 141.7L670.2 140.7L667.1 141.0L665.2 140.9L663.4 141.2L662.2 141.0L660.6 140.8L658.0 140.7L656.0 140.2L654.8 138.6L654.7 137.8L653.7 137.6L652.4 138.3L651.5 138.7L649.2 138.3L647.8 137.1L645.0 134.5L643.9 132.7L642.8 132.4L641.7 132.7L640.4 133.8L641.0 135.3L643.1 137.9L643.8 138.9L643.9 140.3L644.7 141.7L644.9 140.5L645.6 139.4L646.1 140.8L646.2 142.0L645.7 142.6L647.6 142.7L650.7 142.3L652.1 140.8L653.2 140.0L653.9 139.0L653.8 141.1L654.4 142.5L657.4 143.7L659.3 145.6L658.5 147.5L657.4 149.1L655.9 150.4L656.1 151.5L654.8 152.3L654.0 153.1L651.9 153.9L650.2 154.8L647.1 156.1L647.1 157.0L645.2 157.7L642.2 158.9L639.6 159.9L637.2 160.7L635.6 161.7L633.1 161.9L632.8 160.8L632.3 158.4L631.9 155.9L631.6 154.9L629.8 152.8L629.3 151.3L626.2 147.3L625.8 145.6L624.4 142.9L623.1 141.4L621.9 139.2L620.7 137.3L619.5 136.0L619.5 133.5L619.1 135.3L618.3 136.7L617.3 135.8L616.3 134.5L615.6 132.8L615.3 133.4L616.5 135.6L617.7 137.5L618.4 139.5L619.4 141.3L620.8 143.2L622.2 146.1L623.1 150.5L623.3 151.3L625.3 153.1L626.7 157.1L627.6 158.1L629.5 158.9L630.3 159.9L632.0 161.3L632.9 162.1L632.9 163.0L631.7 163.6L632.6 163.6L633.2 164.0L635.6 165.5L638.0 164.9L639.6 164.3L642.3 164.1L644.4 163.4L645.7 163.2L645.8 165.5L644.9 167.2L643.4 169.5L642.3 171.4L641.3 173.7L639.6 175.9L637.5 177.8L636.1 179.0L635.3 179.6L631.6 182.9L630.1 184.9L629.0 186.0L627.8 187.4L627.1 188.8L626.1 190.5L625.7 192.1L626.4 193.3L626.8 195.0L626.8 196.7L627.2 198.4L627.9 198.9L628.5 199.5L628.4 203.3L628.5 205.2L628.8 206.6L627.5 208.5L625.2 210.2L622.7 211.5L621.6 212.9L619.4 214.6L619.1 215.8L619.9 217.3L620.1 218.2L620.3 220.2L620.3 221.3L620.0 222.4L618.7 223.1L617.5 223.5L615.7 224.9L616.2 226.5L615.4 229.1L614.9 229.8L613.2 231.7L612.2 233.2L610.7 234.7L608.2 237.2L606.5 238.3L604.5 238.9L603.3 239.4L600.9 239.1L598.9 239.3L595.5 240.5L593.0 239.6L592.9 238.8L592.1 237.2L592.8 235.4L591.1 232.4L590.4 230.6L589.8 229.4L587.7 226.1L587.1 223.2L586.7 221.5L586.7 219.5L585.7 217.5L584.6 215.1L583.4 213.1L582.2 210.2L582.9 206.9L583.1 204.9L584.9 202.6L585.5 200.0L585.5 199.5L584.6 196.5L584.3 194.4L583.1 192.0L583.0 191.2L582.4 190.0L581.0 188.2L580.5 187.8L578.8 186.2L578.3 184.9L577.4 183.3L578.6 181.7L578.8 180.7L579.0 179.3L579.3 177.6L579.0 175.9L577.7 175.1L576.7 175.0L574.9 175.2L573.4 175.4L572.2 174.3L571.4 173.0L568.9 172.0L567.2 172.1L565.3 172.5L563.1 173.4L560.0 174.7L557.0 173.9L553.8 174.4L552.7 174.7L551.0 175.3L549.0 174.3L547.3 172.8L546.1 172.2L545.0 171.2L543.4 170.4L542.1 168.6L541.4 167.0L540.0 165.4L539.3 164.6L538.4 163.2L537.4 163.0L536.5 162.1L536.8 160.6L536.5 159.7L535.3 158.6L536.9 156.4L537.7 153.0L537.3 150.8L536.1 148.5L536.2 147.6L537.7 143.6L540.1 139.4L541.9 137.8L542.6 136.3L545.0 135.2L547.0 133.8L548.0 132.0L547.5 131.6L547.7 130.1L548.6 128.6L551.2 126.3L552.4 125.5L553.3 123.8L553.9 122.4L554.9 122.1L556.2 123.4L557.1 123.3L558.7 123.2L560.2 123.6L562.4 122.5L563.6 122.0L565.5 121.0L568.3 120.5L571.6 120.6L574.5 120.3L575.8 120.3L579.2 119.6L581.1 120.0L580.4 121.2L580.5 122.3L581.2 123.4L580.6 124.2L579.6 125.8L581.0 126.1L581.9 127.1L584.6 127.6L587.6 128.5L590.0 130.6L592.3 131.8L594.2 132.3L595.5 131.3L595.6 129.0L597.1 127.7L598.2 127.6L599.7 127.8L600.6 128.8L601.9 129.0L603.7 130.0L607.1 130.3L609.9 131.2L611.4 130.6L612.2 130.1L614.4 130.1L615.2 130.5L616.5 130.9L617.6 130.7L618.7 130.1L619.1 129.1L619.5 127.7L620.3 125.8L620.8 124.8L620.7 122.9L621.4 120.9L620.5 120.9L618.9 120.5L617.5 121.7L616.1 121.9L614.7 121.0L612.6 120.4L612.3 121.4L610.9 121.6L610.1 120.9L608.7 120.5L607.3 120.1L607.0 119.0L607.1 118.5L605.6 117.7L606.5 116.6L606.2 115.8L605.2 115.5L605.4 114.5L605.7 114.2L608.3 113.9L609.8 113.8L611.4 113.1L610.0 112.6L610.2 112.2L612.0 112.2L614.4 111.8L616.3 110.7L619.8 110.6L621.7 112.0L623.5 112.4L625.0 112.7L627.1 112.6L628.4 112.5L630.1 111.4L630.2 110.4L629.2 108.8L627.1 107.6L626.0 106.6L624.0 105.4L623.2 105.0L622.3 104.4L623.4 104.2L624.4 102.8L624.8 101.4L626.4 100.4L623.6 100.6L622.4 101.3L620.2 102.0L619.2 102.4L620.0 103.8L621.9 104.1L620.2 104.7L619.5 105.1L618.2 105.8L617.5 106.0L617.1 105.6L616.9 104.4L615.5 104.1L616.3 103.3L617.3 102.6L616.2 102.6L614.4 102.2L614.7 101.7L614.0 101.6L612.7 101.8L612.0 103.1L611.0 104.4L609.4 106.4L608.2 108.4L607.5 109.7L608.3 110.9L610.1 112.1L609.8 112.6L607.5 112.7L606.2 113.8L605.4 114.4L606.4 113.4L605.2 113.2L604.9 112.9L602.5 112.7L601.7 113.9L602.4 114.2L601.4 114.5L600.9 114.6L600.2 113.4L599.6 114.5L600.3 115.8L600.8 116.4L599.6 116.6L601.3 117.3L602.0 118.9L601.4 118.5L600.3 118.4L601.1 119.4L600.0 119.1L600.5 121.1L599.5 121.1L599.5 121.3L598.8 120.1L598.2 120.5L597.6 118.9L598.2 117.8L597.7 117.6L596.7 116.5L595.9 115.5L595.5 114.8L594.6 113.7L594.6 112.0L594.5 111.0L594.0 110.5L593.2 109.9L592.4 109.4L589.8 107.8L587.8 106.6L587.3 104.8L586.6 104.2L585.6 105.1L585.2 103.8L585.5 103.5L583.2 104.0L583.4 104.9L583.1 106.0L583.6 106.7L585.1 107.6L586.2 109.8L589.4 110.9L588.9 111.5L590.4 112.4L592.2 113.3L593.1 114.2L592.8 114.9L592.3 114.4L591.0 113.7L590.0 114.9L590.9 116.2L589.9 116.9L589.2 118.4L588.5 118.1L588.9 117.0L589.1 115.7L588.7 114.5L587.9 114.5L587.1 113.3L586.3 112.9L585.2 112.2L583.6 111.8L583.0 111.2L582.3 110.5L581.2 109.9L580.2 108.9L579.9 107.7L579.1 106.6L577.8 106.0L577.0 106.2L575.9 107.2L575.0 107.4L574.1 108.3L572.9 108.6L572.0 108.2L570.8 108.0L570.1 107.9L569.3 108.0L568.4 108.6L568.3 109.4L568.7 110.1L566.9 111.9L565.4 112.4L564.8 113.2L563.4 114.6L562.9 115.6L563.7 116.9L562.6 117.6L562.3 118.9L561.8 119.0L560.8 119.8L559.9 120.6L559.5 120.4L557.8 120.6L556.3 120.7L555.5 121.0L554.8 121.7L554.4 122.0L553.3 121.0L552.3 119.8L550.7 120.1L549.0 120.1L549.2 118.4L548.6 117.5L548.2 116.8L548.3 115.7L549.1 114.2L549.4 112.3L549.2 111.3L549.3 110.3L548.5 109.0L549.9 108.0L551.0 107.2L552.1 107.7L554.3 107.7L557.3 107.9L558.6 108.1L560.2 108.1L560.9 107.8L561.5 105.5L561.6 103.7L561.6 102.5L560.5 101.8L559.9 100.2L558.4 99.8L558.0 99.3L556.4 99.2L555.8 98.7L555.7 98.1L556.0 97.5L557.0 97.3L558.6 97.1L559.0 97.7L560.2 97.5L561.0 97.5L560.8 97.1L560.3 95.2L561.4 95.3L561.6 96.0L563.0 96.1L563.6 95.7L565.2 94.8L565.9 94.2L566.0 93.1L566.4 92.7L567.2 92.4L568.1 92.1L569.0 91.5L569.7 90.9L570.0 90.4L570.7 89.5L571.0 88.4L572.1 87.8L573.3 87.3L574.6 87.5L574.9 86.7L576.5 87.1L577.1 87.1L577.4 86.3L577.6 85.9L577.2 85.2L577.8 85.0L577.3 84.1L577.0 82.8L576.4 82.6L576.5 81.6L576.6 80.0L577.2 79.1L579.4 78.0L580.4 77.6L580.3 78.3L579.9 79.5L581.0 80.7L579.8 81.3L579.3 82.7L578.6 84.3L579.7 85.3L581.2 85.2L580.9 86.2L581.8 86.3L582.8 85.7L583.4 85.0L584.9 84.5L586.3 86.3L588.3 85.7L590.4 84.8L591.5 84.4L593.6 84.8L593.3 85.3L594.8 85.1L595.3 84.6L595.4 84.0L597.2 82.3L597.1 80.5L598.0 78.4L599.6 77.6L600.5 78.5L601.6 79.4L602.1 79.2L602.5 78.0L602.7 76.1L601.1 75.5L601.1 74.8L600.9 74.2L602.0 73.9L603.1 73.6L605.1 73.3L608.4 73.6L609.0 73.0L609.9 72.3L611.8 72.4L609.4 70.6L606.6 71.2L603.4 72.0L600.2 72.7L599.1 71.2L597.6 70.4L597.9 69.6L597.6 66.8L598.0 64.7L599.8 63.2L600.5 62.8L602.6 60.6L604.1 59.8L602.8 57.9L602.1 57.7L600.6 57.7L598.9 58.3L597.9 59.0L597.4 60.6L596.0 62.9L593.4 64.2L592.2 65.9L591.1 66.4L590.8 68.1L590.9 70.7L592.9 71.6L593.7 72.8L592.8 74.0L592.2 74.9L590.7 75.3L589.4 75.6L590.1 77.6L589.8 78.7L589.6 80.1L589.1 81.3L588.4 81.3L587.0 81.6L586.3 81.8L586.4 82.6L585.5 82.9L584.5 83.0L584.3 82.5L583.8 81.5L583.4 80.9L584.0 80.1L583.0 79.1L582.5 77.7L581.8 76.2L581.3 74.9L581.0 74.2L580.6 72.6L579.4 74.6L578.5 75.0L577.4 76.0L576.2 76.7L574.7 77.1L574.3 76.8L573.0 76.0L572.4 74.8L571.8 73.7L571.3 70.9L571.3 69.8L571.4 68.4L571.6 66.9L573.2 66.3L575.8 64.7L577.2 63.7L578.8 63.2L580.2 61.4L581.4 60.2L583.0 58.6L583.6 57.2L584.3 55.6L586.5 53.8L588.3 52.1L586.7 51.2L589.2 48.2L590.7 47.6L593.8 47.2L596.3 46.2L599.5 44.3L601.4 44.2ZM554.3 94.6L555.1 94.7L556.8 93.9L557.5 94.2L557.9 93.4L559.5 93.6L561.3 93.4L562.1 93.1L563.8 93.1L565.0 92.7L565.6 92.3L565.7 91.7L564.5 91.6L564.8 91.4L565.3 90.9L566.0 90.2L566.2 89.4L565.5 88.4L564.2 88.4L563.7 88.7L564.0 87.9L563.6 87.0L562.9 86.7L563.3 85.8L562.4 85.0L561.6 84.6L561.2 83.9L560.2 82.1L560.0 81.8L558.4 81.7L559.2 81.0L558.7 80.6L560.1 79.0L560.5 78.2L560.2 77.7L556.8 78.1L557.3 77.3L558.5 76.0L558.6 75.5L557.9 75.5L555.4 75.6L554.9 77.0L554.1 77.7L553.3 78.2L552.8 78.4L554.1 79.3L553.5 80.0L553.3 80.9L554.6 80.7L553.3 82.3L554.1 83.2L555.5 82.3L555.9 82.9L555.2 84.2L555.6 84.7L557.6 84.1L558.4 84.0L557.6 85.0L558.3 85.9L558.8 85.9L558.5 86.5L558.5 87.4L557.3 87.6L556.0 87.6L555.8 88.7L556.8 89.6L555.9 90.2L554.9 90.7L555.2 91.1L556.7 91.4L558.3 91.6L559.1 91.3L558.6 91.9L557.8 92.1L556.2 92.5L555.2 93.8ZM551.6 83.0L553.5 83.4L554.3 84.5L554.7 85.2L553.3 86.1L553.6 87.5L553.8 88.3L553.2 90.1L552.2 90.2L550.2 90.9L547.6 91.6L547.0 91.3L546.7 90.6L546.6 90.2L547.5 89.2L549.0 87.9L547.0 87.4L547.0 86.1L547.4 85.4L549.6 85.4L550.1 85.0L549.3 84.6L550.1 83.5ZM590.0 26.1L585.9 22.7L585.1 20.7L581.0 19.3L581.8 17.2L580.6 15.4L585.1 14.5L589.1 13.9L589.5 13.7L592.3 15.4L593.1 16.4L596.3 18.9L597.9 20.0L593.9 22.7L591.5 24.8ZM592.3 13.5L595.5 12.1L601.1 12.4L606.7 13.5L603.5 16.1L598.7 16.4L593.9 15.0ZM597.1 20.3L601.1 20.7L601.9 22.7L598.7 23.4L597.1 22.1ZM638.8 12.1L642.8 10.4L646.8 12.1L642.0 13.2ZM646.0 41.5L649.2 44.4L652.4 44.4L655.6 44.4L654.0 41.8L652.4 38.8L652.4 36.4L655.6 34.2L658.8 31.0L662.8 28.4L669.3 25.8L673.8 24.8L669.3 24.4L663.6 26.8L658.8 28.1L654.8 30.4L652.4 32.6L650.8 34.8L649.2 36.7L647.6 39.1ZM715.0 15.7L717.4 13.2L722.2 13.9L725.4 16.4L723.8 18.2L719.0 18.2L715.8 17.5ZM724.6 18.9L731.0 20.0L731.8 21.4L727.0 21.4L723.8 20.3ZM714.2 10.9L717.4 9.4L720.6 11.3L716.6 12.8ZM783.1 30.0L786.4 27.1L791.2 28.1L796.0 29.4L794.4 31.0L788.0 31.7L783.9 31.3ZM799.2 29.7L804.0 30.7L802.4 32.0L798.4 31.0ZM788.0 34.5L793.6 35.7L791.2 36.7L788.0 36.1ZM849.7 42.7L853.7 41.6L855.8 42.7L852.9 43.7L850.2 43.7ZM792.1 85.2L793.1 88.3L793.2 91.5L794.0 94.2L795.5 96.9L792.8 96.3L792.6 98.8L793.6 101.2L793.4 102.7L792.3 101.6L791.2 103.1L791.0 100.8L791.3 97.8L791.4 94.7L790.7 90.9L790.8 87.4ZM791.1 103.8L796.5 106.2L797.3 108.1L795.0 108.9L793.2 110.8L790.5 109.5L789.6 110.1L789.9 111.1L788.1 111.8L787.6 110.1L788.4 108.1L790.0 108.2L790.6 106.9L790.7 104.8ZM789.4 111.7L790.3 111.9L790.4 113.6L791.1 115.2L789.6 117.8L789.6 120.1L789.3 122.5L787.7 123.9L787.6 122.7L787.4 123.5L786.1 124.5L785.1 124.5L783.1 124.5L782.8 123.8L783.0 125.1L781.1 126.6L780.1 125.2L780.4 124.4L778.2 124.5L775.8 125.0L773.4 125.7L774.2 124.9L775.3 124.0L776.2 123.0L776.9 122.7L778.7 122.8L780.3 122.4L781.1 122.9L781.6 122.6L781.5 122.1L782.5 120.9L783.7 119.2L783.1 120.5L783.5 120.6L785.1 119.8L786.4 118.4L787.6 116.6L787.5 114.6L788.0 114.1L788.4 112.2L789.2 112.9ZM773.4 125.8L774.6 126.2L774.6 126.9L775.1 127.5L774.6 128.1L774.2 129.4L774.1 130.3L773.0 130.9L772.4 130.5L772.2 129.2L771.9 128.6L771.6 127.9L771.4 127.1L771.1 126.8L771.8 126.5L772.6 126.2ZM775.1 126.8L776.2 125.9L776.7 125.4L778.4 125.0L779.4 125.2L778.7 126.9L777.6 126.5L776.7 127.9L775.9 127.0ZM758.4 140.8L759.1 141.4L758.4 143.1L758.1 144.6L757.2 146.6L756.8 145.9L756.1 144.8L756.2 143.4L757.0 142.0L757.5 141.3ZM737.7 151.1L738.6 150.0L739.8 149.6L741.0 149.6L741.4 150.4L740.6 151.8L739.8 152.5L739.0 152.8L737.8 152.3ZM756.8 152.3L758.9 152.6L759.4 152.3L759.7 154.3L759.4 155.9L758.4 156.6L758.4 158.1L758.8 159.4L760.2 159.2L762.1 160.0L762.5 162.0L761.2 161.3L760.0 161.0L759.9 159.9L758.6 159.9L757.5 160.1L756.8 159.4L757.4 158.7L756.8 159.0L756.2 158.4L755.7 156.7L756.4 156.3L756.4 155.4L756.5 153.9ZM764.7 166.5L765.8 167.3L766.1 169.4L766.5 170.6L765.8 172.0L765.0 172.7L764.9 171.1L764.5 172.5L764.4 173.3L762.6 172.5L762.3 171.1L761.5 170.1L760.5 170.2L759.2 171.2L759.1 169.9L760.2 169.0L761.3 168.3L762.0 169.1L762.8 168.6L763.6 167.8ZM739.3 179.0L740.6 179.5L741.9 178.3L742.1 177.8L744.6 177.2L746.3 175.2L747.9 174.3L749.5 172.7L750.7 171.1L751.5 171.7L752.8 172.9L754.6 174.0L753.6 175.1L752.5 175.5L752.0 176.8L752.7 178.6L754.2 180.7L752.5 181.0L751.9 183.3L750.8 184.3L750.1 185.5L750.3 187.1L749.5 188.2L747.4 189.0L747.1 187.8L744.6 187.4L742.7 187.9L740.2 187.0L739.8 184.7L738.6 182.4L738.2 180.9L738.2 179.8ZM716.3 173.4L719.2 174.0L721.1 175.1L721.7 176.2L723.6 177.5L725.1 178.9L726.2 179.4L727.5 180.7L729.2 181.5L729.9 182.6L729.4 183.9L730.9 184.0L731.7 186.0L733.3 187.0L733.4 187.6L733.1 189.0L733.3 191.7L732.3 191.1L731.2 191.8L730.2 190.3L729.1 189.7L727.4 188.4L725.4 186.2L724.4 183.8L723.2 182.0L721.9 179.6L720.3 178.4L719.0 177.0L717.5 175.6ZM732.1 193.2L733.4 191.8L734.8 192.1L737.1 192.3L737.6 193.1L740.5 193.5L741.4 192.6L744.0 193.4L744.2 193.9L746.3 194.5L747.0 194.8L747.1 196.4L744.6 195.6L741.4 195.6L738.2 194.8L736.6 194.8L734.1 194.1ZM761.5 199.0L762.3 197.4L763.9 196.2L767.6 195.8L767.1 196.3L764.7 197.3L762.8 198.7ZM763.7 179.9L764.2 179.7L763.1 181.5L760.8 181.5L757.5 181.6L756.0 181.5L755.9 183.7L758.3 183.7L760.4 183.8L761.3 183.9L759.4 184.9L758.3 185.3L758.9 186.8L759.6 187.8L760.0 188.7L760.5 189.4L759.4 190.1L758.3 189.8L758.4 188.9L757.3 188.1L757.3 186.6L756.4 187.0L756.5 190.0L756.6 191.3L754.9 190.6L755.1 187.9L754.0 186.8L754.8 185.3L754.8 184.2L755.6 183.4L755.6 182.0L756.0 181.1L757.3 180.2L759.1 180.6L761.2 180.8L762.8 180.4ZM773.5 183.6L775.9 182.9L778.5 183.7L778.5 185.2L779.1 186.8L779.9 187.7L781.4 186.8L783.1 185.5L783.9 184.9L785.9 185.3L789.1 186.4L790.0 186.6L793.8 188.0L795.2 188.5L797.3 190.6L798.9 191.8L800.5 192.9L799.2 193.1L799.5 194.4L801.1 196.0L801.6 196.6L802.9 196.8L803.7 197.9L805.4 198.8L804.0 199.4L802.4 198.9L800.3 198.6L799.4 197.6L797.6 195.5L797.3 195.1L795.2 194.5L793.6 195.6L793.1 196.9L791.2 197.1L789.6 196.9L788.4 196.0L786.4 195.3L784.3 195.8L785.9 194.0L786.2 193.2L784.7 191.1L782.3 189.8L779.9 189.4L777.8 188.2L776.4 188.7L775.1 187.0L776.7 186.3L778.2 186.0L776.1 185.8L775.0 184.9L773.4 184.5ZM801.3 191.3L803.2 191.1L805.3 191.1L806.4 190.2L807.5 189.0L807.8 190.2L806.4 191.3L805.3 192.3L803.2 192.4L801.4 191.8ZM792.0 199.5L793.6 202.5L794.0 205.6L795.2 205.2L796.5 207.4L797.3 209.7L797.7 211.5L798.9 213.6L801.2 214.8L802.7 216.7L803.7 218.7L805.3 219.2L806.1 221.3L807.8 222.9L809.3 222.7L809.0 224.6L809.1 227.4L809.8 229.5L809.0 232.4L808.7 234.4L806.9 237.0L806.1 238.7L805.4 239.8L805.3 241.0L804.3 242.2L803.9 244.7L803.9 245.4L801.6 246.0L800.8 246.1L798.2 248.4L796.8 247.4L795.8 246.3L793.6 247.9L790.5 247.1L788.8 246.3L787.6 244.5L787.2 242.6L786.2 241.8L784.9 241.9L785.5 240.6L784.7 239.4L784.3 241.0L783.0 241.3L783.8 239.7L784.6 237.6L784.4 236.3L784.0 237.3L782.3 239.0L781.4 240.4L780.3 239.9L778.7 236.9L777.8 235.7L775.1 235.4L773.7 234.5L770.3 234.9L767.1 236.0L764.7 236.5L762.3 237.4L762.1 238.3L758.9 238.8L755.9 238.9L752.5 240.9L750.3 240.8L748.1 239.7L747.9 238.2L748.9 237.7L749.1 235.4L748.3 233.3L747.9 232.4L747.2 229.8L746.5 227.9L744.9 225.2L746.1 225.5L746.6 225.0L745.7 223.1L745.3 221.5L745.9 220.1L746.5 217.8L746.9 219.0L748.0 217.6L750.6 215.9L753.6 215.3L755.9 214.6L758.3 212.8L759.4 211.4L760.6 208.8L761.6 210.3L761.6 208.7L763.1 208.2L762.9 207.0L764.2 205.9L765.5 204.9L767.0 204.5L768.4 205.7L768.9 206.5L769.2 206.4L770.3 206.4L771.3 206.4L771.0 204.9L771.9 203.9L773.3 202.4L774.3 202.0L775.6 202.0L775.1 200.3L776.1 200.6L777.5 201.3L778.7 201.7L780.7 201.8L781.5 201.8L782.8 202.0L783.1 202.2L782.7 203.6L781.5 203.9L781.4 205.2L780.6 206.1L781.4 207.0L782.7 208.0L783.1 208.0L784.7 209.3L786.4 209.7L787.3 210.8L789.3 210.7L790.2 208.2L790.6 206.5L790.5 204.6L790.9 202.7L790.8 200.8L791.4 199.9ZM795.5 251.4L798.4 252.2L801.3 251.8L801.3 253.7L800.8 255.4L800.6 256.2L799.2 256.9L797.6 256.9L796.8 255.6L796.3 254.3L795.5 252.4ZM840.4 239.7L841.4 240.8L842.8 241.2L843.3 242.4L843.9 244.2L844.9 243.6L845.5 244.8L846.0 245.7L847.8 246.3L849.8 245.8L848.9 247.6L848.7 248.5L847.1 249.1L847.5 249.4L846.5 251.2L844.6 253.1L843.7 252.6L844.3 251.4L844.1 250.0L842.8 249.3L842.1 248.8L842.6 248.3L843.5 247.4L843.8 246.4L843.3 244.6L842.7 243.4L841.5 241.7L841.0 241.0ZM840.4 251.0L840.9 251.2L841.4 252.5L843.0 252.0L843.0 253.4L842.0 254.7L841.0 255.9L841.0 257.4L839.8 257.8L838.2 258.6L837.7 260.0L837.2 261.4L835.8 262.7L833.4 263.0L832.4 262.2L830.6 262.1L830.5 261.2L831.3 259.8L832.5 259.0L833.8 257.8L834.5 257.5L836.1 256.4L837.6 255.2L838.0 254.8L838.6 253.4L839.4 252.5L839.4 251.6ZM691.5 166.6L692.1 166.5L693.7 168.6L694.4 169.9L694.7 171.1L694.4 171.9L693.5 172.5L692.7 172.8L692.0 172.6L691.5 171.1L691.3 169.4L691.6 167.9ZM642.4 201.6L643.6 203.8L644.1 206.4L644.4 208.0L643.3 207.2L643.1 208.5L642.6 211.7L641.7 214.8L641.0 216.9L640.1 219.5L638.8 223.3L635.8 224.3L634.0 223.2L633.4 220.4L632.8 218.5L632.9 217.7L634.4 215.3L634.5 213.1L634.0 211.6L634.7 208.5L636.1 208.2L637.7 207.7L639.1 206.5L640.2 205.9L640.9 203.9L641.7 202.3ZM583.4 118.6L583.4 118.2L584.8 118.0L586.7 118.2L588.4 117.8L587.6 119.3L587.9 120.0L587.6 120.7L586.3 120.0L585.1 119.7L584.3 119.2ZM576.6 112.7L576.5 113.4L576.9 114.9L576.9 116.1L577.6 116.6L578.1 116.0L578.7 116.1L579.0 114.5L579.0 112.8L578.2 112.1L577.2 112.8ZM581.2 82.3L582.6 81.4L583.6 81.6L583.6 82.5L583.0 83.4L582.8 84.4L581.0 84.4L581.4 83.4Z" fill="#9cdccf" stroke="#9cdccf" stroke-width=".5" stroke-linejoin="round"></path><path d="M430.3 65.2L432.7 65.9L431.4 66.7L429.6 66.9ZM434.6 66.7L435.9 66.7L435.7 68.4L434.8 68.2ZM437.7 152.7L438.6 152.3L440.1 152.5L441.2 153.1L440.1 153.4L438.8 153.4ZM455.6 152.4L458.1 152.5L457.7 153.1L455.6 153.2ZM464.1 165.1L465.6 164.9L465.6 166.0L464.1 166.1ZM438.0 141.2L438.6 141.2L438.9 142.7L438.0 142.4ZM438.5 138.4L439.7 138.6L439.9 139.3L439.4 139.5ZM459.9 95.0L463.2 95.6L464.4 96.5L461.5 96.1ZM460.1 101.3L462.0 101.8L464.0 101.9L463.0 102.8L461.1 102.2ZM349.9 85.9L352.2 86.1L351.8 87.6L353.3 90.4L351.0 88.3ZM295.1 71.8L297.5 71.3L297.6 72.6L295.9 72.8ZM294.6 87.4L296.7 86.1L296.8 86.7L295.2 87.8ZM292.3 88.5L294.1 87.2L294.1 87.8L292.7 88.7ZM641.2 48.2L643.3 48.2L643.0 49.6L641.5 49.6ZM657.2 45.3L660.1 45.9L659.6 47.0L657.7 46.5ZM756.4 160.6L757.8 160.6L758.3 162.0L757.6 162.6L757.2 161.8ZM751.4 168.8L752.7 167.5L753.8 166.4L755.1 165.2L755.4 163.9L754.8 164.3L754.3 165.4L753.1 167.0L751.5 168.1ZM758.9 163.1L760.8 163.8L760.0 165.1L759.0 165.5L759.1 164.6ZM760.7 164.7L761.6 164.9L761.0 166.4L760.8 167.7L759.8 166.6L760.0 165.6ZM762.3 164.3L762.5 164.9L761.6 167.0L761.3 166.9L762.0 165.1ZM762.8 162.1L764.4 162.1L765.0 164.3L763.9 164.3L763.4 163.3ZM762.9 163.9L763.9 164.6L764.2 165.9L763.6 166.0L763.1 164.9ZM762.0 166.4L763.1 166.0L763.1 166.7L762.3 166.9ZM744.2 193.5L746.4 193.4L746.1 193.9L744.3 193.9ZM747.0 195.3L749.0 195.8L748.2 196.5ZM749.2 195.8L750.6 195.7L750.1 196.6L749.3 196.5ZM750.7 195.8L752.7 195.3L754.6 195.7L754.3 196.4L751.1 196.9ZM755.6 195.8L758.3 196.0L760.5 195.5L760.7 195.8L759.1 196.6L755.7 196.5ZM754.3 197.4L757.2 198.3L756.2 198.9L754.3 198.0ZM767.9 178.8L768.7 178.8L768.7 180.4L769.8 179.9L769.8 181.8L768.7 181.5L769.3 183.6L768.5 182.8L768.2 181.0L767.9 179.9ZM768.5 187.4L770.3 186.8L773.2 187.1L773.2 188.4L770.3 187.8L768.7 187.8ZM765.5 187.4L767.4 187.6L766.9 188.4L765.7 188.1ZM732.6 185.0L734.4 186.3L733.4 187.1L732.3 185.7ZM736.0 186.5L736.9 186.8L736.5 187.4ZM719.3 180.1L720.4 181.0L719.9 181.3ZM721.7 183.9L722.7 185.0L722.0 185.2ZM805.3 186.5L807.2 187.6L809.0 189.5L808.5 189.8L806.4 187.6ZM811.4 191.0L813.5 192.7L812.8 193.4L811.5 191.9ZM819.4 197.3L821.3 198.1L820.0 198.2ZM821.0 195.6L822.3 197.4L821.6 197.6ZM817.1 194.2L819.7 195.8L819.1 196.0ZM814.4 193.1L816.2 194.2L815.5 194.4ZM822.1 198.9L823.7 199.5L822.9 199.7ZM830.6 206.0L831.6 206.7L830.9 207.5ZM831.6 208.2L832.5 209.0L831.9 209.2ZM833.0 210.8L833.8 211.0L833.3 211.3ZM826.4 215.0L828.9 216.3L831.3 218.7L830.3 218.7L827.7 216.8ZM847.8 210.8L849.9 210.8L849.7 211.8L847.8 211.6ZM849.7 209.5L852.1 208.7L851.3 209.5ZM832.2 263.4L833.2 263.6L832.9 264.3L832.1 264.2ZM648.9 162.1L650.8 162.1L650.0 162.5L649.1 162.4ZM578.5 108.8L578.7 110.5L578.2 111.9L577.4 111.2L577.2 110.0L577.4 109.5L578.3 109.4ZM601.1 122.9L602.2 122.8L603.7 123.1L605.6 123.2L605.4 123.8L603.1 123.9L601.2 123.4ZM615.2 123.7L616.3 123.1L617.8 123.1L618.9 122.5L618.0 123.8L616.3 124.5L615.4 124.2ZM567.2 115.3L568.4 114.6L568.9 115.1L568.3 115.8ZM579.1 82.7L580.6 82.5L580.7 83.6L579.6 83.8ZM592.4 78.7L593.9 77.3L593.7 78.4L592.8 79.5ZM598.5 76.3L600.3 75.5L600.6 76.1L598.7 77.0ZM599.0 74.9L600.3 74.7L599.8 75.4ZM551.7 66.9L553.0 66.7L552.7 68.7ZM561.0 71.1L562.0 70.6L561.5 72.4ZM558.1 74.5L559.2 74.2L558.7 75.0ZM552.2 76.6L553.5 75.9L553.1 77.0L551.7 78.7L551.4 78.0ZM673.8 267.9L676.5 268.1L676.0 269.1L674.1 269.1ZM465.2 273.1L467.2 272.8L468.0 274.0L466.4 274.6ZM468.1 272.9L470.7 273.1L469.7 274.4L468.0 274.6ZM416.6 182.6L417.6 183.6L417.0 183.9ZM536.3 135.7L537.6 135.2L536.9 136.2ZM540.5 135.0L541.3 135.3L540.6 136.0ZM313.2 150.3L314.5 149.6L315.1 150.6L313.7 151.5ZM312.1 148.1L313.2 148.3L312.7 148.8ZM309.7 147.3L310.5 147.1L310.3 147.6ZM765.8 126.9L766.9 126.5L766.5 126.9ZM712.1 160.5L712.6 161.3L712.2 163.6L711.8 162.1ZM799.2 105.4L802.1 103.8L800.6 104.4ZM796.8 107.2L798.2 106.0L797.6 106.6ZM652.1 216.5L652.9 216.5L652.6 217.0ZM655.5 215.0L656.1 215.1L655.6 215.6Z" fill="#9cdccf" opacity=".8"></path><clipPath id="lc"><path d="M459.1 67.7L456.7 67.4L454.3 66.6L451.3 65.4L448.7 63.9L446.3 62.2L443.9 61.1L441.5 61.6L438.6 61.4L437.8 59.8L439.4 58.6L442.3 59.2L444.7 58.5L445.3 56.1L446.6 54.0L447.0 52.1L444.7 50.4L442.3 49.3L440.5 47.6L438.3 46.5L435.9 46.7L432.7 46.3L427.9 46.2L424.7 45.3L421.0 43.6L419.4 40.6L419.7 37.6L421.4 35.1L425.5 34.7L426.6 37.6L428.2 36.1L431.9 35.0L435.9 35.0L439.9 35.7L441.2 37.6L443.9 40.0L446.3 41.5L449.0 43.0L451.9 44.1L453.8 45.3L455.5 47.6L456.4 49.3L459.1 51.5L461.5 53.2L465.1 55.6L464.0 57.5L461.4 60.1L458.7 58.0L455.9 56.1L454.5 56.7L455.9 59.0L458.2 61.6L459.6 63.4L459.8 65.2L457.5 64.7L453.5 63.0L455.1 64.9L457.2 66.7ZM428.7 57.5L426.7 58.3L425.5 60.1L423.9 62.2L425.1 63.4L426.3 64.7L429.0 64.4L430.3 62.2L432.7 62.7L434.8 62.9L433.5 61.1L431.1 60.3L429.5 59.3ZM375.3 46.2L378.1 48.2L381.4 50.1L385.4 50.3L388.6 50.1L391.8 49.3L394.9 48.7L398.2 49.6L400.3 49.0L401.4 47.0L400.6 45.6L401.6 44.1L399.0 43.3L395.8 41.8L395.0 37.9L393.4 36.4L390.2 38.5L388.6 37.6L386.2 37.6L383.8 38.8L380.5 36.7L379.7 36.2L376.5 38.2L373.7 40.9L372.7 42.1L374.9 42.4L378.1 41.8L373.3 43.6L374.9 44.4L383.8 45.0L375.3 45.6ZM361.6 40.3L362.9 37.9L363.7 35.4L365.0 33.2L368.5 32.6L372.5 33.6L375.3 33.6L378.5 35.7L375.7 37.6L372.5 40.0L370.6 41.8L366.4 43.0L365.3 42.1L362.4 40.5ZM375.7 30.4L381.4 32.9L386.2 31.7L391.0 31.0L394.2 31.0L393.7 28.1L390.2 25.4L387.0 26.1L387.8 28.4L383.0 26.8L378.1 26.1L374.9 27.4L377.3 29.4ZM366.4 27.4L369.3 28.4L373.3 26.8L377.3 24.4L378.1 23.1L374.1 23.4L370.1 25.4ZM396.6 29.7L401.4 31.0L406.2 31.0L406.7 29.1L405.4 26.1L401.4 25.4L397.4 26.8ZM408.6 29.7L413.4 31.0L413.4 32.0L410.2 32.3L408.6 31.0ZM408.6 25.4L415.8 25.8L419.8 26.4L420.6 29.4L422.3 28.4L428.7 28.4L433.5 28.7L435.6 29.7L434.6 32.3L431.1 32.6L425.5 32.6L420.6 32.0L416.2 32.0L415.5 30.4L414.2 28.1L410.2 26.8ZM410.2 35.1L414.2 33.9L418.6 34.5L419.0 37.3L416.6 38.5L415.0 40.3L411.8 40.3L410.2 38.5L409.9 36.7ZM399.0 37.6L402.2 34.5L407.0 34.5L408.6 37.3L408.5 39.4L406.2 42.1L403.8 42.1L400.6 40.6L398.7 38.8ZM403.8 49.0L405.4 46.5L408.6 46.7L410.5 48.4L408.6 50.4L405.4 50.7ZM419.8 26.4L423.1 26.8L428.7 26.8L433.5 26.8L435.9 27.1L438.6 26.4L438.6 24.4L442.3 21.0L443.6 17.5L449.5 15.0L452.7 12.8L457.5 10.2L459.9 8.3L464.0 5.6L464.8 4.4L459.1 2.8L451.1 2.0L443.1 2.2L435.1 2.8L427.1 4.8L422.3 6.4L417.4 8.3L415.8 9.4L417.4 11.7L423.9 13.9L425.5 15.4L423.9 17.5L426.3 19.3L422.3 20.3L419.8 23.1L422.3 24.4ZM409.4 14.3L413.4 9.1L417.4 10.9L420.6 12.8L422.3 16.4L421.4 19.3L417.4 20.3L414.2 18.9L410.2 16.4ZM395.0 19.6L398.2 16.4L403.0 18.2L404.6 20.7L399.8 21.7L395.8 20.3ZM407.0 18.6L409.4 20.0L407.8 21.4L405.9 20.3ZM382.2 19.3L387.0 18.6L387.0 20.3L382.2 21.0ZM383.8 21.4L387.0 21.4L387.0 23.1L383.0 23.1ZM493.0 72.8L490.4 71.8L488.8 70.4L486.1 69.9L483.7 67.4L482.4 64.9L480.5 61.9L479.5 59.3L477.3 54.8L477.6 51.8L479.2 49.8L481.6 49.6L481.6 48.2L480.0 46.5L475.3 47.3L475.7 45.3L475.8 44.1L479.2 44.7L480.8 43.3L477.6 42.4L474.4 41.2L474.2 37.9L472.8 34.8L471.2 32.3L469.6 29.7L465.6 28.1L460.7 27.4L455.9 27.8L453.0 26.1L450.3 24.8L448.7 22.7L446.3 20.3L447.1 18.9L452.7 17.9L459.1 15.7L459.9 13.5L455.9 12.4L459.1 10.2L464.0 9.4L467.2 6.8L472.0 5.6L478.4 5.2L483.2 4.4L489.6 2.8L496.0 1.6L505.7 0.4L511.3 -0.2L518.5 0.8L523.3 2.0L526.5 3.2L529.7 6.4L532.1 7.9L539.3 7.9L544.2 7.9L543.4 10.2L539.3 11.7L536.1 13.5L533.7 15.0L532.9 17.5L530.5 20.3L532.1 22.4L533.7 25.1L531.3 26.4L531.8 28.4L532.4 30.4L530.5 32.3L532.4 33.2L528.9 34.5L528.1 36.4L525.7 37.6L528.1 39.7L527.3 41.8L528.6 44.7L524.1 43.6L520.1 44.4L523.3 45.6L527.6 45.9L525.7 47.6L522.5 49.3L519.3 50.7L515.3 51.5L512.1 52.3L509.7 54.8L506.5 57.2L503.3 58.3L500.0 58.8L498.4 61.4L498.1 63.7L496.8 65.7L495.2 68.4L494.6 70.9ZM524.1 58.5L525.2 56.7L527.3 56.0L529.2 58.5L531.0 56.9L533.7 56.8L537.4 55.9L540.0 56.4L540.0 58.0L541.7 59.6L539.7 61.6L536.9 62.8L533.2 63.9L530.5 63.4L527.2 62.8L528.1 61.6L524.9 60.2L528.1 59.8L527.3 58.8ZM427.1 146.7L428.2 145.6L430.0 144.8L431.4 144.5L433.2 144.5L434.8 144.8L436.4 145.8L438.3 145.9L439.7 147.1L441.5 147.9L443.1 148.6L444.5 149.4L443.1 150.0L441.2 149.8L438.8 150.0L439.6 149.0L438.0 148.6L437.5 148.1L435.9 147.0L434.3 146.4L433.2 146.1L431.7 145.8L429.8 146.1L428.7 146.6ZM444.0 152.5L444.4 152.0L446.3 152.4L447.4 152.2L446.6 151.3L445.7 150.0L447.6 150.2L449.5 150.0L451.3 150.4L452.2 151.0L453.2 151.5L453.8 152.1L453.2 152.8L451.3 152.4L450.2 152.8L448.9 153.8L448.2 153.0L446.5 152.9L445.0 153.0ZM468.3 99.6L469.7 97.8L470.4 95.7L471.5 93.4L472.5 91.9L474.4 91.3L473.6 93.0L472.5 94.7L474.1 94.9L475.2 96.1L476.9 95.9L477.6 97.2L478.2 97.4L477.1 98.6L478.6 98.4L479.0 99.8L478.2 101.5L476.9 101.0L476.5 99.8L475.2 101.0L473.7 101.0L474.1 99.8L472.0 99.6ZM357.5 93.1L359.2 93.3L362.4 94.7L364.5 96.3L365.5 97.9L363.4 97.7L361.6 96.7L360.2 95.5L358.4 94.5ZM315.4 78.2L316.7 77.1L318.8 75.9L319.6 77.3L319.1 78.4L317.5 79.5L315.9 79.8ZM293.8 58.3L296.7 56.7L300.7 55.6L303.7 56.4L301.6 54.2L299.1 52.6L295.9 50.8L296.8 49.3L301.2 47.3L304.4 45.3L308.4 43.9L312.4 42.2L318.0 43.6L322.8 44.7L326.0 45.3L330.8 46.2L337.2 47.2L340.4 47.5L344.5 49.3L347.7 47.6L350.1 47.7L353.3 46.5L355.7 46.2L358.1 44.4L359.7 46.7L362.1 47.9L363.4 45.9L365.3 47.9L369.3 46.7L374.1 49.0L378.1 49.3L378.9 52.1L383.8 52.6L387.0 51.9L389.4 53.2L390.2 55.3L391.3 52.9L391.8 51.0L395.0 50.7L396.6 51.8L400.6 52.6L404.6 52.3L406.2 50.7L407.8 50.4L409.4 53.4L410.5 51.5L411.8 49.6L409.1 46.7L408.6 42.7L411.8 40.3L414.6 42.7L415.8 46.2L417.0 47.6L418.7 50.1L421.9 49.3L423.4 53.4L426.1 50.1L426.3 47.3L427.9 46.6L431.9 47.0L432.8 49.0L432.7 51.8L431.6 53.7L432.8 54.5L429.5 56.4L426.3 55.9L424.5 56.4L425.5 58.5L423.1 61.1L421.4 62.4L418.2 63.4L415.8 65.4L414.2 67.9L412.3 69.9L411.5 72.3L412.1 75.2L414.1 75.3L415.0 79.3L417.4 78.7L422.9 81.6L427.1 83.2L431.4 83.4L431.6 86.1L431.4 88.3L432.7 90.0L434.0 91.9L435.7 92.1L437.0 90.0L437.0 87.8L436.7 85.9L435.6 84.5L438.9 83.0L440.5 80.7L440.5 78.2L438.1 75.9L439.1 73.5L439.3 72.1L438.3 70.4L438.6 68.4L438.1 66.7L439.1 66.1L442.0 66.7L445.2 66.3L447.9 68.2L448.7 69.4L451.6 69.8L451.8 72.3L451.8 74.0L453.7 75.6L455.1 76.3L457.5 75.2L458.8 73.3L459.6 71.3L460.7 73.5L461.9 74.9L463.2 76.8L464.4 80.3L466.7 83.0L468.8 83.9L470.4 84.8L471.3 85.9L472.0 87.0L473.9 88.7L474.1 90.2L471.8 91.7L468.8 93.0L467.2 94.1L464.3 94.2L461.4 94.1L456.9 94.2L455.3 96.1L454.0 96.5L451.6 98.5L449.8 100.8L451.1 100.4L453.5 97.9L455.1 97.1L458.3 96.2L460.4 97.2L460.3 98.0L458.3 98.7L456.9 98.8L458.2 99.5L459.8 99.0L459.1 100.6L459.5 102.0L460.4 102.5L461.5 103.2L462.8 103.4L464.1 103.1L464.9 103.5L465.1 102.2L465.7 101.2L466.4 100.8L466.7 101.8L467.4 102.8L466.0 103.7L465.6 104.2L464.0 104.9L461.5 105.6L460.1 106.4L458.2 108.0L457.2 107.2L457.9 105.6L459.5 104.4L460.1 103.4L458.8 103.8L457.4 104.4L455.8 104.6L455.9 105.2L454.0 106.2L452.7 106.6L450.8 107.5L450.0 108.7L450.2 109.4L449.5 110.0L450.2 110.8L451.1 111.1L451.1 111.5L450.1 111.7L448.9 111.8L447.9 112.0L446.3 112.2L444.9 113.1L444.7 113.7L444.5 115.0L444.1 115.7L443.2 116.5L442.3 115.7L442.9 116.8L443.0 117.7L442.5 118.5L441.6 119.9L441.3 118.3L440.9 116.0L440.7 118.3L441.0 120.1L441.5 120.3L442.0 122.0L442.3 123.3L440.7 124.4L439.3 124.7L438.4 125.9L436.8 126.1L436.4 127.0L435.2 127.8L433.6 129.2L432.8 130.9L432.8 132.0L433.0 132.9L433.6 134.5L434.2 135.4L434.6 137.1L435.0 138.4L434.9 140.0L434.4 141.0L433.3 141.2L432.2 139.6L431.7 138.6L430.8 136.7L430.6 135.7L430.2 134.3L429.3 132.9L428.3 132.5L427.1 133.4L426.4 133.2L425.9 132.4L423.5 132.1L422.3 132.2L420.8 132.0L419.7 132.4L420.0 133.6L420.5 134.5L419.8 134.2L418.9 134.2L417.8 134.3L417.0 133.9L415.7 133.4L413.8 133.1L412.9 133.2L411.3 133.9L410.5 134.5L408.9 135.5L407.5 136.7L407.2 137.9L407.6 139.7L406.9 141.4L406.5 143.1L406.6 144.9L406.5 146.0L407.3 148.1L408.0 149.3L409.2 151.1L409.7 152.0L411.0 152.2L412.0 152.9L413.4 152.5L414.7 152.1L416.2 152.0L417.1 151.5L417.9 150.8L418.2 150.0L418.4 148.8L418.6 148.0L419.6 147.6L421.9 147.1L423.7 147.1L424.3 147.9L423.7 148.8L423.1 149.5L423.1 150.6L422.7 152.0L422.1 152.5L422.1 153.1L421.9 153.9L421.8 155.6L420.8 156.6L421.3 156.8L422.3 156.7L424.2 156.7L425.5 156.5L427.1 156.6L428.2 156.7L430.0 158.1L429.6 159.7L429.3 161.3L429.1 163.0L429.1 164.7L430.2 166.2L430.9 166.9L431.5 167.3L432.2 167.8L433.2 168.1L434.0 167.7L435.2 167.2L435.7 166.9L436.7 166.9L437.5 167.2L438.5 167.8L439.3 168.3L440.1 169.4L440.3 168.5L440.9 168.0L441.5 167.3L442.1 166.9L442.3 165.6L443.3 164.4L444.4 164.2L445.8 164.1L446.5 163.7L448.5 162.2L449.4 162.8L449.0 163.3L448.0 164.4L448.6 164.7L449.5 164.6L450.6 163.9L450.8 163.6L451.1 162.6L451.4 163.4L451.8 163.8L453.7 164.3L454.0 164.7L454.3 165.4L456.0 165.2L457.5 165.3L458.8 166.0L459.6 166.0L460.4 165.5L461.5 165.2L463.2 165.1L464.1 165.0L463.2 165.7L463.5 166.2L464.6 166.4L465.7 167.2L465.9 168.5L467.2 168.6L468.8 169.6L469.7 171.2L471.2 172.2L471.8 172.8L473.6 172.9L474.9 172.9L476.8 173.0L479.5 174.4L480.5 175.2L481.1 175.6L481.8 177.8L482.6 178.9L483.4 180.5L482.4 181.8L484.0 181.8L485.8 182.7L485.6 184.6L486.6 183.3L487.5 183.3L489.6 184.1L491.2 184.7L492.0 186.6L493.6 186.2L495.2 186.5L496.4 187.0L498.4 186.9L500.0 187.3L501.6 188.3L503.3 189.5L504.1 190.2L506.5 190.6L506.9 191.6L507.6 193.8L507.5 195.2L506.1 197.8L505.0 199.2L504.0 199.9L503.3 201.0L501.6 203.3L500.8 204.7L500.8 206.2L501.0 208.2L500.8 208.9L500.5 211.0L499.7 212.3L499.6 214.1L498.8 215.3L497.7 217.1L497.7 218.2L496.0 219.7L494.1 219.8L492.0 220.0L490.6 221.2L489.1 221.5L487.2 222.9L485.8 224.1L485.4 225.3L485.6 227.7L485.3 229.3L483.7 230.7L482.9 232.2L482.1 233.7L480.8 235.1L479.8 235.7L477.7 238.6L477.1 239.7L475.3 240.8L473.3 240.6L470.6 239.9L469.7 239.0L469.8 240.1L471.3 240.8L471.7 241.6L471.4 242.6L472.5 243.3L471.1 246.3L469.2 247.4L467.2 248.0L464.8 248.2L463.6 247.9L463.8 249.1L463.8 251.0L463.5 251.8L461.1 252.3L459.1 251.6L459.0 252.9L459.3 254.3L461.1 254.1L461.4 255.1L460.3 255.5L459.1 255.2L459.3 256.4L458.7 258.4L458.2 259.8L456.7 260.2L455.1 261.5L455.0 262.6L456.7 264.0L457.9 264.2L457.7 265.3L455.9 267.2L455.0 268.5L453.7 270.1L452.6 271.8L452.4 273.3L453.8 274.9L453.4 275.6L454.8 278.1L456.7 279.4L459.0 280.0L458.3 280.6L456.3 280.8L455.5 282.9L453.5 281.9L451.1 281.2L448.7 279.8L447.1 278.7L445.8 277.0L443.6 275.8L442.6 273.1L442.3 271.0L442.1 267.9L442.1 265.8L443.9 264.8L442.1 263.4L442.9 261.8L443.6 259.8L444.1 257.8L444.4 256.4L444.5 253.9L445.0 253.5L445.2 253.1L445.7 249.8L445.5 247.3L445.3 245.6L445.3 244.8L446.2 244.0L446.8 242.3L447.6 240.8L448.2 239.0L448.5 238.3L448.5 237.3L448.6 235.4L448.4 232.8L449.0 231.8L448.7 230.1L449.0 228.4L449.8 226.8L450.1 225.0L450.3 223.9L450.5 220.9L450.2 220.0L450.8 218.3L450.9 215.1L450.6 212.3L449.0 210.9L447.9 209.8L445.5 208.7L442.8 207.2L441.0 204.7L441.2 204.4L439.7 201.7L438.9 200.2L437.3 196.9L436.6 195.4L435.2 193.4L433.6 192.1L433.2 191.6L433.3 190.5L433.0 189.8L433.4 188.9L434.4 187.9L434.9 187.4L435.2 186.5L434.6 186.5L433.5 185.8L433.9 183.8L434.4 182.9L435.0 182.2L434.9 181.3L435.6 180.7L436.8 180.3L437.0 179.4L437.8 178.3L438.9 178.1L439.7 176.1L439.2 175.4L439.0 173.5L439.3 172.2L438.5 170.7L438.1 170.2L437.6 169.4L437.9 168.8L436.8 168.1L435.9 167.9L435.5 168.5L434.8 169.0L434.4 169.1L435.1 170.2L434.4 170.7L433.6 170.7L433.3 170.1L432.4 169.4L431.6 169.0L430.4 169.4L430.0 168.5L429.1 168.8L429.1 168.3L428.3 167.1L427.6 166.8L427.3 166.3L426.9 166.9L425.9 166.2L425.7 165.6L425.8 164.7L425.7 164.2L424.7 163.4L423.5 162.1L422.7 161.5L423.2 161.2L422.6 161.0L421.4 161.1L420.2 160.5L419.3 160.4L417.8 159.9L415.5 158.9L415.2 158.6L412.9 156.6L410.7 156.1L408.6 157.0L407.7 156.7L405.4 155.9L403.2 155.0L400.5 153.7L399.5 153.2L397.4 152.6L396.1 151.4L395.0 150.6L393.9 149.1L394.6 148.7L394.2 148.1L394.5 147.2L392.7 144.4L391.1 142.6L389.7 141.0L388.5 140.3L387.8 138.4L385.5 136.4L383.8 134.8L382.6 132.9L381.3 130.4L379.3 129.5L379.2 130.9L379.6 132.7L381.4 134.5L382.5 136.2L383.3 137.4L383.8 138.1L384.8 139.6L385.8 141.4L386.5 142.8L387.3 143.1L387.9 144.0L387.1 145.0L386.6 144.0L385.4 142.9L383.6 142.0L383.4 140.5L383.3 139.5L381.7 138.4L381.2 138.4L380.2 137.7L378.8 136.5L380.4 136.1L380.1 134.8L379.4 133.8L377.8 133.1L377.3 132.0L376.9 130.9L376.3 129.4L375.5 128.2L375.3 127.7L375.1 127.0L374.3 126.3L373.5 126.0L373.3 125.6L372.4 125.4L371.4 124.9L370.2 124.8L370.0 123.5L369.6 123.1L367.9 121.4L367.9 120.9L367.7 120.2L366.9 118.6L366.1 118.3L365.0 116.6L363.9 113.7L364.3 112.6L364.2 111.2L363.6 109.1L364.0 108.0L364.4 105.6L364.5 102.3L364.3 100.9L363.4 98.0L365.5 98.5L366.5 98.5L367.1 100.0L367.1 98.4L366.9 97.3L365.8 96.1L364.5 95.3L363.6 95.0L362.6 94.0L360.5 93.4L358.9 92.6L358.4 92.2L358.3 90.4L357.9 90.1L356.6 88.3L355.7 87.2L354.4 85.4L354.2 84.4L353.3 84.5L349.9 84.5L348.6 81.8L347.4 81.2L346.3 79.2L344.6 77.4L344.2 76.6L342.2 74.9L339.2 73.4L336.4 72.4L332.6 72.3L331.6 72.3L329.6 71.0L328.4 70.1L326.8 69.9L325.7 70.9L323.7 72.1L322.0 73.7L319.8 74.2L320.4 73.3L320.7 71.0L323.0 69.4L321.2 69.9L319.9 70.6L318.8 72.3L317.5 73.7L316.6 74.0L317.2 75.4L315.9 76.8L314.0 78.0L312.4 79.3L309.3 80.9L307.6 82.1L306.0 83.0L304.4 83.4L302.4 83.6L301.3 84.2L298.9 85.0L299.5 84.0L302.0 83.0L303.6 81.8L305.9 81.6L308.4 79.8L309.0 79.5L310.5 78.0L310.9 76.6L311.6 75.3L310.8 75.2L309.2 75.3L308.5 76.1L306.1 74.7L304.7 75.5L303.3 75.5L303.9 74.2L303.6 72.6L303.1 71.6L301.2 72.8L300.2 72.7L298.7 71.1L298.1 69.7L297.0 68.6L297.0 67.9L297.8 66.2L299.1 64.7L301.2 64.8L303.4 63.7L305.5 62.7L304.8 61.5L304.9 60.0L303.1 60.9L302.3 61.6L300.7 61.0L298.1 61.1L296.3 60.6L296.5 59.2ZM604.8 43.0L607.8 43.0L610.7 44.1L613.3 45.0L611.2 46.7L613.9 47.0L615.5 46.5L617.1 47.9L620.3 48.4L623.5 49.8L627.1 51.5L629.5 54.5L629.2 55.6L627.6 56.7L624.4 57.1L620.3 56.1L617.1 55.1L615.5 54.2L617.9 56.7L618.9 58.5L619.2 61.1L621.9 62.4L624.5 62.7L623.1 61.4L621.9 60.3L622.7 59.4L625.2 60.2L627.2 60.9L628.4 61.0L627.6 59.0L627.2 58.3L630.0 56.9L631.6 55.9L633.2 56.7L634.3 57.5L634.5 55.9L633.8 54.0L634.0 52.3L632.9 50.0L636.4 50.7L637.5 52.3L636.4 53.7L638.0 54.8L639.9 54.5L641.2 52.6L644.4 51.0L648.4 49.3L650.0 49.1L649.2 51.0L650.8 51.2L652.4 50.4L655.6 49.8L658.0 50.7L659.6 51.0L660.9 49.3L660.4 46.7L662.8 47.0L666.9 48.2L670.1 50.4L673.0 51.0L673.8 49.6L671.7 47.6L670.7 44.7L671.2 42.4L673.3 40.3L674.1 37.9L675.7 36.7L678.1 37.0L680.2 39.7L680.0 43.3L679.7 46.2L681.3 49.0L681.8 51.8L679.4 55.1L678.1 56.4L680.2 56.7L681.3 54.0L682.9 50.1L683.1 47.9L682.1 45.3L681.3 41.8L683.7 38.8L687.7 38.5L690.9 38.5L693.0 38.5L692.5 35.7L698.1 34.5L702.1 34.5L703.7 32.6L707.8 30.0L713.4 28.4L717.4 27.4L722.2 26.4L726.2 24.8L728.6 23.1L730.7 22.0L734.2 23.4L736.6 25.4L742.2 25.8L745.4 27.8L745.9 29.4L743.8 32.0L739.0 34.5L735.0 36.7L739.8 35.4L745.4 35.7L747.9 35.4L752.7 35.7L755.1 37.3L757.5 37.3L760.7 37.3L762.3 35.1L766.3 34.5L769.5 36.4L771.1 38.8L770.8 40.9L770.2 41.4L772.7 43.6L773.5 43.9L775.9 41.8L776.2 40.5L779.1 42.1L782.3 41.8L784.7 41.8L787.2 39.4L789.1 37.6L793.6 38.5L797.6 39.4L802.4 39.7L804.8 42.1L808.0 43.6L813.6 43.0L818.4 43.6L820.8 47.0L824.0 47.0L827.3 47.0L830.5 47.3L833.7 46.2L836.1 49.0L836.6 47.0L837.0 45.9L840.9 46.5L845.7 46.7L848.9 47.9L853.1 49.3L856.9 50.7L860.9 54.5L861.7 54.2L864.9 55.3L868.5 56.8L868.6 57.2L866.5 58.3L864.1 60.3L862.9 61.4L859.3 60.6L855.3 58.5L853.7 57.2L852.9 58.5L849.7 60.6L848.1 60.5L849.7 62.4L850.8 65.2L850.7 66.8L847.3 66.2L844.1 67.9L840.1 70.1L836.6 72.6L832.9 71.1L829.7 71.6L828.1 72.3L825.6 72.8L824.8 74.7L825.3 77.0L824.0 77.5L825.2 79.3L825.3 81.4L823.2 81.2L822.9 83.9L823.4 84.4L820.8 85.4L819.9 87.8L817.9 88.3L817.3 90.4L814.7 92.8L813.6 90.4L813.0 86.1L813.1 81.6L814.9 78.2L816.8 76.6L819.7 73.5L823.1 71.3L825.2 68.7L826.4 66.4L824.8 66.2L823.2 68.7L821.6 70.9L820.8 67.7L816.8 68.2L814.4 68.7L812.0 72.3L811.2 73.5L812.3 74.2L808.8 74.7L805.3 73.4L802.4 73.3L797.6 74.0L793.1 73.9L789.6 75.9L786.4 78.7L784.7 80.7L783.1 83.9L780.7 84.8L783.1 86.1L785.5 86.5L788.0 86.1L789.9 87.6L790.0 88.3L789.2 91.5L788.8 94.7L788.4 96.8L786.4 99.8L785.5 101.8L783.9 103.8L782.0 105.8L779.9 108.0L777.0 109.4L775.0 108.6L773.2 109.5L771.9 110.7L771.4 112.6L769.2 114.5L768.1 114.9L767.8 116.1L769.3 117.3L770.6 119.2L771.0 122.0L770.5 123.6L768.2 124.3L766.3 124.9L766.3 122.3L766.1 120.5L766.5 119.3L764.7 118.8L763.6 118.1L764.4 117.0L763.9 115.5L762.8 114.7L760.7 115.5L758.4 116.6L758.3 115.5L759.4 113.6L758.8 112.8L757.5 113.0L755.6 114.6L753.5 116.2L752.3 116.5L752.0 117.3L753.5 118.3L754.4 118.6L754.3 119.8L755.7 119.4L757.1 118.6L758.1 119.1L759.3 119.2L760.1 119.4L759.9 120.3L757.5 120.9L756.4 121.9L754.8 123.8L754.9 124.2L756.4 125.4L757.3 127.4L758.4 128.6L758.9 130.1L758.8 130.9L757.5 131.7L756.8 132.1L758.9 132.9L759.1 134.1L758.4 135.7L757.3 136.4L756.4 137.9L755.6 139.1L755.2 139.6L754.3 141.0L753.8 141.7L752.8 142.3L751.5 143.7L750.7 144.3L748.7 145.3L746.6 145.9L745.6 145.4L745.5 146.2L743.8 146.9L742.2 147.3L740.6 147.8L740.5 149.1L740.2 149.4L739.5 148.5L739.4 147.3L738.4 147.4L737.3 147.1L736.6 147.3L734.7 148.5L734.2 149.5L733.3 150.6L733.0 152.0L734.2 153.5L734.5 153.9L736.1 155.5L737.0 156.3L738.1 157.6L738.6 160.1L738.9 161.7L738.6 163.2L738.2 163.7L736.8 164.7L735.2 165.6L734.5 166.4L733.7 167.2L731.4 168.5L731.6 167.0L731.9 166.2L730.9 165.6L729.4 165.2L728.4 163.4L727.8 162.8L727.0 162.1L725.9 161.9L725.2 161.9L725.2 161.5L724.6 160.5L723.8 160.7L723.7 162.0L723.5 163.3L722.7 165.4L722.7 167.3L723.8 168.5L724.0 168.8L724.8 170.7L725.9 171.2L726.8 172.0L727.4 172.4L728.8 173.7L729.3 175.6L729.2 176.2L729.4 177.8L730.0 178.4L730.6 180.1L729.9 180.3L729.2 179.9L728.0 179.1L727.4 178.8L726.7 178.3L726.0 177.5L725.1 175.9L724.4 173.6L724.3 172.5L723.8 171.7L722.8 170.4L722.0 169.4L721.1 169.6L721.1 168.6L721.6 166.3L721.6 162.2L720.7 159.7L720.3 157.7L719.9 155.6L718.8 154.9L717.9 155.6L716.4 156.7L715.0 156.6L714.5 156.4L714.8 153.9L714.7 152.3L713.7 151.0L712.4 149.5L711.4 148.4L710.9 147.4L710.6 145.9L709.2 145.4L708.6 146.4L707.0 146.8L705.0 146.9L703.7 147.1L702.9 147.3L702.6 148.6L702.5 149.3L701.1 150.1L699.6 151.0L697.0 153.6L695.4 154.8L695.2 155.6L693.6 156.2L693.2 156.9L691.9 157.2L691.9 159.0L692.2 161.2L691.5 163.0L691.5 165.7L690.4 165.9L690.1 167.2L688.7 168.1L687.8 169.3L686.7 168.6L685.7 166.3L684.9 164.2L683.5 161.5L682.3 158.4L681.8 157.2L681.0 154.8L680.2 151.5L680.0 150.0L680.2 149.1L680.0 148.0L679.7 146.1L679.2 146.9L677.3 148.6L676.2 148.3L675.0 147.0L674.0 146.0L676.2 144.9L674.6 145.1L673.3 144.3L672.8 143.6L671.7 143.2L670.8 141.7L670.2 140.7L667.1 141.0L665.2 140.9L663.4 141.2L662.2 141.0L660.6 140.8L658.0 140.7L656.0 140.2L654.8 138.6L654.7 137.8L653.7 137.6L652.4 138.3L651.5 138.7L649.2 138.3L647.8 137.1L645.0 134.5L643.9 132.7L642.8 132.4L641.7 132.7L640.4 133.8L641.0 135.3L643.1 137.9L643.8 138.9L643.9 140.3L644.7 141.7L644.9 140.5L645.6 139.4L646.1 140.8L646.2 142.0L645.7 142.6L647.6 142.7L650.7 142.3L652.1 140.8L653.2 140.0L653.9 139.0L653.8 141.1L654.4 142.5L657.4 143.7L659.3 145.6L658.5 147.5L657.4 149.1L655.9 150.4L656.1 151.5L654.8 152.3L654.0 153.1L651.9 153.9L650.2 154.8L647.1 156.1L647.1 157.0L645.2 157.7L642.2 158.9L639.6 159.9L637.2 160.7L635.6 161.7L633.1 161.9L632.8 160.8L632.3 158.4L631.9 155.9L631.6 154.9L629.8 152.8L629.3 151.3L626.2 147.3L625.8 145.6L624.4 142.9L623.1 141.4L621.9 139.2L620.7 137.3L619.5 136.0L619.5 133.5L619.1 135.3L618.3 136.7L617.3 135.8L616.3 134.5L615.6 132.8L615.3 133.4L616.5 135.6L617.7 137.5L618.4 139.5L619.4 141.3L620.8 143.2L622.2 146.1L623.1 150.5L623.3 151.3L625.3 153.1L626.7 157.1L627.6 158.1L629.5 158.9L630.3 159.9L632.0 161.3L632.9 162.1L632.9 163.0L631.7 163.6L632.6 163.6L633.2 164.0L635.6 165.5L638.0 164.9L639.6 164.3L642.3 164.1L644.4 163.4L645.7 163.2L645.8 165.5L644.9 167.2L643.4 169.5L642.3 171.4L641.3 173.7L639.6 175.9L637.5 177.8L636.1 179.0L635.3 179.6L631.6 182.9L630.1 184.9L629.0 186.0L627.8 187.4L627.1 188.8L626.1 190.5L625.7 192.1L626.4 193.3L626.8 195.0L626.8 196.7L627.2 198.4L627.9 198.9L628.5 199.5L628.4 203.3L628.5 205.2L628.8 206.6L627.5 208.5L625.2 210.2L622.7 211.5L621.6 212.9L619.4 214.6L619.1 215.8L619.9 217.3L620.1 218.2L620.3 220.2L620.3 221.3L620.0 222.4L618.7 223.1L617.5 223.5L615.7 224.9L616.2 226.5L615.4 229.1L614.9 229.8L613.2 231.7L612.2 233.2L610.7 234.7L608.2 237.2L606.5 238.3L604.5 238.9L603.3 239.4L600.9 239.1L598.9 239.3L595.5 240.5L593.0 239.6L592.9 238.8L592.1 237.2L592.8 235.4L591.1 232.4L590.4 230.6L589.8 229.4L587.7 226.1L587.1 223.2L586.7 221.5L586.7 219.5L585.7 217.5L584.6 215.1L583.4 213.1L582.2 210.2L582.9 206.9L583.1 204.9L584.9 202.6L585.5 200.0L585.5 199.5L584.6 196.5L584.3 194.4L583.1 192.0L583.0 191.2L582.4 190.0L581.0 188.2L580.5 187.8L578.8 186.2L578.3 184.9L577.4 183.3L578.6 181.7L578.8 180.7L579.0 179.3L579.3 177.6L579.0 175.9L577.7 175.1L576.7 175.0L574.9 175.2L573.4 175.4L572.2 174.3L571.4 173.0L568.9 172.0L567.2 172.1L565.3 172.5L563.1 173.4L560.0 174.7L557.0 173.9L553.8 174.4L552.7 174.7L551.0 175.3L549.0 174.3L547.3 172.8L546.1 172.2L545.0 171.2L543.4 170.4L542.1 168.6L541.4 167.0L540.0 165.4L539.3 164.6L538.4 163.2L537.4 163.0L536.5 162.1L536.8 160.6L536.5 159.7L535.3 158.6L536.9 156.4L537.7 153.0L537.3 150.8L536.1 148.5L536.2 147.6L537.7 143.6L540.1 139.4L541.9 137.8L542.6 136.3L545.0 135.2L547.0 133.8L548.0 132.0L547.5 131.6L547.7 130.1L548.6 128.6L551.2 126.3L552.4 125.5L553.3 123.8L553.9 122.4L554.9 122.1L556.2 123.4L557.1 123.3L558.7 123.2L560.2 123.6L562.4 122.5L563.6 122.0L565.5 121.0L568.3 120.5L571.6 120.6L574.5 120.3L575.8 120.3L579.2 119.6L581.1 120.0L580.4 121.2L580.5 122.3L581.2 123.4L580.6 124.2L579.6 125.8L581.0 126.1L581.9 127.1L584.6 127.6L587.6 128.5L590.0 130.6L592.3 131.8L594.2 132.3L595.5 131.3L595.6 129.0L597.1 127.7L598.2 127.6L599.7 127.8L600.6 128.8L601.9 129.0L603.7 130.0L607.1 130.3L609.9 131.2L611.4 130.6L612.2 130.1L614.4 130.1L615.2 130.5L616.5 130.9L617.6 130.7L618.7 130.1L619.1 129.1L619.5 127.7L620.3 125.8L620.8 124.8L620.7 122.9L621.4 120.9L620.5 120.9L618.9 120.5L617.5 121.7L616.1 121.9L614.7 121.0L612.6 120.4L612.3 121.4L610.9 121.6L610.1 120.9L608.7 120.5L607.3 120.1L607.0 119.0L607.1 118.5L605.6 117.7L606.5 116.6L606.2 115.8L605.2 115.5L605.4 114.5L605.7 114.2L608.3 113.9L609.8 113.8L611.4 113.1L610.0 112.6L610.2 112.2L612.0 112.2L614.4 111.8L616.3 110.7L619.8 110.6L621.7 112.0L623.5 112.4L625.0 112.7L627.1 112.6L628.4 112.5L630.1 111.4L630.2 110.4L629.2 108.8L627.1 107.6L626.0 106.6L624.0 105.4L623.2 105.0L622.3 104.4L623.4 104.2L624.4 102.8L624.8 101.4L626.4 100.4L623.6 100.6L622.4 101.3L620.2 102.0L619.2 102.4L620.0 103.8L621.9 104.1L620.2 104.7L619.5 105.1L618.2 105.8L617.5 106.0L617.1 105.6L616.9 104.4L615.5 104.1L616.3 103.3L617.3 102.6L616.2 102.6L614.4 102.2L614.7 101.7L614.0 101.6L612.7 101.8L612.0 103.1L611.0 104.4L609.4 106.4L608.2 108.4L607.5 109.7L608.3 110.9L610.1 112.1L609.8 112.6L607.5 112.7L606.2 113.8L605.4 114.4L606.4 113.4L605.2 113.2L604.9 112.9L602.5 112.7L601.7 113.9L602.4 114.2L601.4 114.5L600.9 114.6L600.2 113.4L599.6 114.5L600.3 115.8L600.8 116.4L599.6 116.6L601.3 117.3L602.0 118.9L601.4 118.5L600.3 118.4L601.1 119.4L600.0 119.1L600.5 121.1L599.5 121.1L599.5 121.3L598.8 120.1L598.2 120.5L597.6 118.9L598.2 117.8L597.7 117.6L596.7 116.5L595.9 115.5L595.5 114.8L594.6 113.7L594.6 112.0L594.5 111.0L594.0 110.5L593.2 109.9L592.4 109.4L589.8 107.8L587.8 106.6L587.3 104.8L586.6 104.2L585.6 105.1L585.2 103.8L585.5 103.5L583.2 104.0L583.4 104.9L583.1 106.0L583.6 106.7L585.1 107.6L586.2 109.8L589.4 110.9L588.9 111.5L590.4 112.4L592.2 113.3L593.1 114.2L592.8 114.9L592.3 114.4L591.0 113.7L590.0 114.9L590.9 116.2L589.9 116.9L589.2 118.4L588.5 118.1L588.9 117.0L589.1 115.7L588.7 114.5L587.9 114.5L587.1 113.3L586.3 112.9L585.2 112.2L583.6 111.8L583.0 111.2L582.3 110.5L581.2 109.9L580.2 108.9L579.9 107.7L579.1 106.6L577.8 106.0L577.0 106.2L575.9 107.2L575.0 107.4L574.1 108.3L572.9 108.6L572.0 108.2L570.8 108.0L570.1 107.9L569.3 108.0L568.4 108.6L568.3 109.4L568.7 110.1L566.9 111.9L565.4 112.4L564.8 113.2L563.4 114.6L562.9 115.6L563.7 116.9L562.6 117.6L562.3 118.9L561.8 119.0L560.8 119.8L559.9 120.6L559.5 120.4L557.8 120.6L556.3 120.7L555.5 121.0L554.8 121.7L554.4 122.0L553.3 121.0L552.3 119.8L550.7 120.1L549.0 120.1L549.2 118.4L548.6 117.5L548.2 116.8L548.3 115.7L549.1 114.2L549.4 112.3L549.2 111.3L549.3 110.3L548.5 109.0L549.9 108.0L551.0 107.2L552.1 107.7L554.3 107.7L557.3 107.9L558.6 108.1L560.2 108.1L560.9 107.8L561.5 105.5L561.6 103.7L561.6 102.5L560.5 101.8L559.9 100.2L558.4 99.8L558.0 99.3L556.4 99.2L555.8 98.7L555.7 98.1L556.0 97.5L557.0 97.3L558.6 97.1L559.0 97.7L560.2 97.5L561.0 97.5L560.8 97.1L560.3 95.2L561.4 95.3L561.6 96.0L563.0 96.1L563.6 95.7L565.2 94.8L565.9 94.2L566.0 93.1L566.4 92.7L567.2 92.4L568.1 92.1L569.0 91.5L569.7 90.9L570.0 90.4L570.7 89.5L571.0 88.4L572.1 87.8L573.3 87.3L574.6 87.5L574.9 86.7L576.5 87.1L577.1 87.1L577.4 86.3L577.6 85.9L577.2 85.2L577.8 85.0L577.3 84.1L577.0 82.8L576.4 82.6L576.5 81.6L576.6 80.0L577.2 79.1L579.4 78.0L580.4 77.6L580.3 78.3L579.9 79.5L581.0 80.7L579.8 81.3L579.3 82.7L578.6 84.3L579.7 85.3L581.2 85.2L580.9 86.2L581.8 86.3L582.8 85.7L583.4 85.0L584.9 84.5L586.3 86.3L588.3 85.7L590.4 84.8L591.5 84.4L593.6 84.8L593.3 85.3L594.8 85.1L595.3 84.6L595.4 84.0L597.2 82.3L597.1 80.5L598.0 78.4L599.6 77.6L600.5 78.5L601.6 79.4L602.1 79.2L602.5 78.0L602.7 76.1L601.1 75.5L601.1 74.8L600.9 74.2L602.0 73.9L603.1 73.6L605.1 73.3L608.4 73.6L609.0 73.0L609.9 72.3L611.8 72.4L609.4 70.6L606.6 71.2L603.4 72.0L600.2 72.7L599.1 71.2L597.6 70.4L597.9 69.6L597.6 66.8L598.0 64.7L599.8 63.2L600.5 62.8L602.6 60.6L604.1 59.8L602.8 57.9L602.1 57.7L600.6 57.7L598.9 58.3L597.9 59.0L597.4 60.6L596.0 62.9L593.4 64.2L592.2 65.9L591.1 66.4L590.8 68.1L590.9 70.7L592.9 71.6L593.7 72.8L592.8 74.0L592.2 74.9L590.7 75.3L589.4 75.6L590.1 77.6L589.8 78.7L589.6 80.1L589.1 81.3L588.4 81.3L587.0 81.6L586.3 81.8L586.4 82.6L585.5 82.9L584.5 83.0L584.3 82.5L583.8 81.5L583.4 80.9L584.0 80.1L583.0 79.1L582.5 77.7L581.8 76.2L581.3 74.9L581.0 74.2L580.6 72.6L579.4 74.6L578.5 75.0L577.4 76.0L576.2 76.7L574.7 77.1L574.3 76.8L573.0 76.0L572.4 74.8L571.8 73.7L571.3 70.9L571.3 69.8L571.4 68.4L571.6 66.9L573.2 66.3L575.8 64.7L577.2 63.7L578.8 63.2L580.2 61.4L581.4 60.2L583.0 58.6L583.6 57.2L584.3 55.6L586.5 53.8L588.3 52.1L586.7 51.2L589.2 48.2L590.7 47.6L593.8 47.2L596.3 46.2L599.5 44.3L601.4 44.2ZM554.3 94.6L555.1 94.7L556.8 93.9L557.5 94.2L557.9 93.4L559.5 93.6L561.3 93.4L562.1 93.1L563.8 93.1L565.0 92.7L565.6 92.3L565.7 91.7L564.5 91.6L564.8 91.4L565.3 90.9L566.0 90.2L566.2 89.4L565.5 88.4L564.2 88.4L563.7 88.7L564.0 87.9L563.6 87.0L562.9 86.7L563.3 85.8L562.4 85.0L561.6 84.6L561.2 83.9L560.2 82.1L560.0 81.8L558.4 81.7L559.2 81.0L558.7 80.6L560.1 79.0L560.5 78.2L560.2 77.7L556.8 78.1L557.3 77.3L558.5 76.0L558.6 75.5L557.9 75.5L555.4 75.6L554.9 77.0L554.1 77.7L553.3 78.2L552.8 78.4L554.1 79.3L553.5 80.0L553.3 80.9L554.6 80.7L553.3 82.3L554.1 83.2L555.5 82.3L555.9 82.9L555.2 84.2L555.6 84.7L557.6 84.1L558.4 84.0L557.6 85.0L558.3 85.9L558.8 85.9L558.5 86.5L558.5 87.4L557.3 87.6L556.0 87.6L555.8 88.7L556.8 89.6L555.9 90.2L554.9 90.7L555.2 91.1L556.7 91.4L558.3 91.6L559.1 91.3L558.6 91.9L557.8 92.1L556.2 92.5L555.2 93.8ZM551.6 83.0L553.5 83.4L554.3 84.5L554.7 85.2L553.3 86.1L553.6 87.5L553.8 88.3L553.2 90.1L552.2 90.2L550.2 90.9L547.6 91.6L547.0 91.3L546.7 90.6L546.6 90.2L547.5 89.2L549.0 87.9L547.0 87.4L547.0 86.1L547.4 85.4L549.6 85.4L550.1 85.0L549.3 84.6L550.1 83.5ZM590.0 26.1L585.9 22.7L585.1 20.7L581.0 19.3L581.8 17.2L580.6 15.4L585.1 14.5L589.1 13.9L589.5 13.7L592.3 15.4L593.1 16.4L596.3 18.9L597.9 20.0L593.9 22.7L591.5 24.8ZM592.3 13.5L595.5 12.1L601.1 12.4L606.7 13.5L603.5 16.1L598.7 16.4L593.9 15.0ZM597.1 20.3L601.1 20.7L601.9 22.7L598.7 23.4L597.1 22.1ZM638.8 12.1L642.8 10.4L646.8 12.1L642.0 13.2ZM646.0 41.5L649.2 44.4L652.4 44.4L655.6 44.4L654.0 41.8L652.4 38.8L652.4 36.4L655.6 34.2L658.8 31.0L662.8 28.4L669.3 25.8L673.8 24.8L669.3 24.4L663.6 26.8L658.8 28.1L654.8 30.4L652.4 32.6L650.8 34.8L649.2 36.7L647.6 39.1ZM715.0 15.7L717.4 13.2L722.2 13.9L725.4 16.4L723.8 18.2L719.0 18.2L715.8 17.5ZM724.6 18.9L731.0 20.0L731.8 21.4L727.0 21.4L723.8 20.3ZM714.2 10.9L717.4 9.4L720.6 11.3L716.6 12.8ZM783.1 30.0L786.4 27.1L791.2 28.1L796.0 29.4L794.4 31.0L788.0 31.7L783.9 31.3ZM799.2 29.7L804.0 30.7L802.4 32.0L798.4 31.0ZM788.0 34.5L793.6 35.7L791.2 36.7L788.0 36.1ZM849.7 42.7L853.7 41.6L855.8 42.7L852.9 43.7L850.2 43.7ZM792.1 85.2L793.1 88.3L793.2 91.5L794.0 94.2L795.5 96.9L792.8 96.3L792.6 98.8L793.6 101.2L793.4 102.7L792.3 101.6L791.2 103.1L791.0 100.8L791.3 97.8L791.4 94.7L790.7 90.9L790.8 87.4ZM791.1 103.8L796.5 106.2L797.3 108.1L795.0 108.9L793.2 110.8L790.5 109.5L789.6 110.1L789.9 111.1L788.1 111.8L787.6 110.1L788.4 108.1L790.0 108.2L790.6 106.9L790.7 104.8ZM789.4 111.7L790.3 111.9L790.4 113.6L791.1 115.2L789.6 117.8L789.6 120.1L789.3 122.5L787.7 123.9L787.6 122.7L787.4 123.5L786.1 124.5L785.1 124.5L783.1 124.5L782.8 123.8L783.0 125.1L781.1 126.6L780.1 125.2L780.4 124.4L778.2 124.5L775.8 125.0L773.4 125.7L774.2 124.9L775.3 124.0L776.2 123.0L776.9 122.7L778.7 122.8L780.3 122.4L781.1 122.9L781.6 122.6L781.5 122.1L782.5 120.9L783.7 119.2L783.1 120.5L783.5 120.6L785.1 119.8L786.4 118.4L787.6 116.6L787.5 114.6L788.0 114.1L788.4 112.2L789.2 112.9ZM773.4 125.8L774.6 126.2L774.6 126.9L775.1 127.5L774.6 128.1L774.2 129.4L774.1 130.3L773.0 130.9L772.4 130.5L772.2 129.2L771.9 128.6L771.6 127.9L771.4 127.1L771.1 126.8L771.8 126.5L772.6 126.2ZM775.1 126.8L776.2 125.9L776.7 125.4L778.4 125.0L779.4 125.2L778.7 126.9L777.6 126.5L776.7 127.9L775.9 127.0ZM758.4 140.8L759.1 141.4L758.4 143.1L758.1 144.6L757.2 146.6L756.8 145.9L756.1 144.8L756.2 143.4L757.0 142.0L757.5 141.3ZM737.7 151.1L738.6 150.0L739.8 149.6L741.0 149.6L741.4 150.4L740.6 151.8L739.8 152.5L739.0 152.8L737.8 152.3ZM756.8 152.3L758.9 152.6L759.4 152.3L759.7 154.3L759.4 155.9L758.4 156.6L758.4 158.1L758.8 159.4L760.2 159.2L762.1 160.0L762.5 162.0L761.2 161.3L760.0 161.0L759.9 159.9L758.6 159.9L757.5 160.1L756.8 159.4L757.4 158.7L756.8 159.0L756.2 158.4L755.7 156.7L756.4 156.3L756.4 155.4L756.5 153.9ZM764.7 166.5L765.8 167.3L766.1 169.4L766.5 170.6L765.8 172.0L765.0 172.7L764.9 171.1L764.5 172.5L764.4 173.3L762.6 172.5L762.3 171.1L761.5 170.1L760.5 170.2L759.2 171.2L759.1 169.9L760.2 169.0L761.3 168.3L762.0 169.1L762.8 168.6L763.6 167.8ZM739.3 179.0L740.6 179.5L741.9 178.3L742.1 177.8L744.6 177.2L746.3 175.2L747.9 174.3L749.5 172.7L750.7 171.1L751.5 171.7L752.8 172.9L754.6 174.0L753.6 175.1L752.5 175.5L752.0 176.8L752.7 178.6L754.2 180.7L752.5 181.0L751.9 183.3L750.8 184.3L750.1 185.5L750.3 187.1L749.5 188.2L747.4 189.0L747.1 187.8L744.6 187.4L742.7 187.9L740.2 187.0L739.8 184.7L738.6 182.4L738.2 180.9L738.2 179.8ZM716.3 173.4L719.2 174.0L721.1 175.1L721.7 176.2L723.6 177.5L725.1 178.9L726.2 179.4L727.5 180.7L729.2 181.5L729.9 182.6L729.4 183.9L730.9 184.0L731.7 186.0L733.3 187.0L733.4 187.6L733.1 189.0L733.3 191.7L732.3 191.1L731.2 191.8L730.2 190.3L729.1 189.7L727.4 188.4L725.4 186.2L724.4 183.8L723.2 182.0L721.9 179.6L720.3 178.4L719.0 177.0L717.5 175.6ZM732.1 193.2L733.4 191.8L734.8 192.1L737.1 192.3L737.6 193.1L740.5 193.5L741.4 192.6L744.0 193.4L744.2 193.9L746.3 194.5L747.0 194.8L747.1 196.4L744.6 195.6L741.4 195.6L738.2 194.8L736.6 194.8L734.1 194.1ZM761.5 199.0L762.3 197.4L763.9 196.2L767.6 195.8L767.1 196.3L764.7 197.3L762.8 198.7ZM763.7 179.9L764.2 179.7L763.1 181.5L760.8 181.5L757.5 181.6L756.0 181.5L755.9 183.7L758.3 183.7L760.4 183.8L761.3 183.9L759.4 184.9L758.3 185.3L758.9 186.8L759.6 187.8L760.0 188.7L760.5 189.4L759.4 190.1L758.3 189.8L758.4 188.9L757.3 188.1L757.3 186.6L756.4 187.0L756.5 190.0L756.6 191.3L754.9 190.6L755.1 187.9L754.0 186.8L754.8 185.3L754.8 184.2L755.6 183.4L755.6 182.0L756.0 181.1L757.3 180.2L759.1 180.6L761.2 180.8L762.8 180.4ZM773.5 183.6L775.9 182.9L778.5 183.7L778.5 185.2L779.1 186.8L779.9 187.7L781.4 186.8L783.1 185.5L783.9 184.9L785.9 185.3L789.1 186.4L790.0 186.6L793.8 188.0L795.2 188.5L797.3 190.6L798.9 191.8L800.5 192.9L799.2 193.1L799.5 194.4L801.1 196.0L801.6 196.6L802.9 196.8L803.7 197.9L805.4 198.8L804.0 199.4L802.4 198.9L800.3 198.6L799.4 197.6L797.6 195.5L797.3 195.1L795.2 194.5L793.6 195.6L793.1 196.9L791.2 197.1L789.6 196.9L788.4 196.0L786.4 195.3L784.3 195.8L785.9 194.0L786.2 193.2L784.7 191.1L782.3 189.8L779.9 189.4L777.8 188.2L776.4 188.7L775.1 187.0L776.7 186.3L778.2 186.0L776.1 185.8L775.0 184.9L773.4 184.5ZM801.3 191.3L803.2 191.1L805.3 191.1L806.4 190.2L807.5 189.0L807.8 190.2L806.4 191.3L805.3 192.3L803.2 192.4L801.4 191.8ZM792.0 199.5L793.6 202.5L794.0 205.6L795.2 205.2L796.5 207.4L797.3 209.7L797.7 211.5L798.9 213.6L801.2 214.8L802.7 216.7L803.7 218.7L805.3 219.2L806.1 221.3L807.8 222.9L809.3 222.7L809.0 224.6L809.1 227.4L809.8 229.5L809.0 232.4L808.7 234.4L806.9 237.0L806.1 238.7L805.4 239.8L805.3 241.0L804.3 242.2L803.9 244.7L803.9 245.4L801.6 246.0L800.8 246.1L798.2 248.4L796.8 247.4L795.8 246.3L793.6 247.9L790.5 247.1L788.8 246.3L787.6 244.5L787.2 242.6L786.2 241.8L784.9 241.9L785.5 240.6L784.7 239.4L784.3 241.0L783.0 241.3L783.8 239.7L784.6 237.6L784.4 236.3L784.0 237.3L782.3 239.0L781.4 240.4L780.3 239.9L778.7 236.9L777.8 235.7L775.1 235.4L773.7 234.5L770.3 234.9L767.1 236.0L764.7 236.5L762.3 237.4L762.1 238.3L758.9 238.8L755.9 238.9L752.5 240.9L750.3 240.8L748.1 239.7L747.9 238.2L748.9 237.7L749.1 235.4L748.3 233.3L747.9 232.4L747.2 229.8L746.5 227.9L744.9 225.2L746.1 225.5L746.6 225.0L745.7 223.1L745.3 221.5L745.9 220.1L746.5 217.8L746.9 219.0L748.0 217.6L750.6 215.9L753.6 215.3L755.9 214.6L758.3 212.8L759.4 211.4L760.6 208.8L761.6 210.3L761.6 208.7L763.1 208.2L762.9 207.0L764.2 205.9L765.5 204.9L767.0 204.5L768.4 205.7L768.9 206.5L769.2 206.4L770.3 206.4L771.3 206.4L771.0 204.9L771.9 203.9L773.3 202.4L774.3 202.0L775.6 202.0L775.1 200.3L776.1 200.6L777.5 201.3L778.7 201.7L780.7 201.8L781.5 201.8L782.8 202.0L783.1 202.2L782.7 203.6L781.5 203.9L781.4 205.2L780.6 206.1L781.4 207.0L782.7 208.0L783.1 208.0L784.7 209.3L786.4 209.7L787.3 210.8L789.3 210.7L790.2 208.2L790.6 206.5L790.5 204.6L790.9 202.7L790.8 200.8L791.4 199.9ZM795.5 251.4L798.4 252.2L801.3 251.8L801.3 253.7L800.8 255.4L800.6 256.2L799.2 256.9L797.6 256.9L796.8 255.6L796.3 254.3L795.5 252.4ZM840.4 239.7L841.4 240.8L842.8 241.2L843.3 242.4L843.9 244.2L844.9 243.6L845.5 244.8L846.0 245.7L847.8 246.3L849.8 245.8L848.9 247.6L848.7 248.5L847.1 249.1L847.5 249.4L846.5 251.2L844.6 253.1L843.7 252.6L844.3 251.4L844.1 250.0L842.8 249.3L842.1 248.8L842.6 248.3L843.5 247.4L843.8 246.4L843.3 244.6L842.7 243.4L841.5 241.7L841.0 241.0ZM840.4 251.0L840.9 251.2L841.4 252.5L843.0 252.0L843.0 253.4L842.0 254.7L841.0 255.9L841.0 257.4L839.8 257.8L838.2 258.6L837.7 260.0L837.2 261.4L835.8 262.7L833.4 263.0L832.4 262.2L830.6 262.1L830.5 261.2L831.3 259.8L832.5 259.0L833.8 257.8L834.5 257.5L836.1 256.4L837.6 255.2L838.0 254.8L838.6 253.4L839.4 252.5L839.4 251.6ZM691.5 166.6L692.1 166.5L693.7 168.6L694.4 169.9L694.7 171.1L694.4 171.9L693.5 172.5L692.7 172.8L692.0 172.6L691.5 171.1L691.3 169.4L691.6 167.9ZM642.4 201.6L643.6 203.8L644.1 206.4L644.4 208.0L643.3 207.2L643.1 208.5L642.6 211.7L641.7 214.8L641.0 216.9L640.1 219.5L638.8 223.3L635.8 224.3L634.0 223.2L633.4 220.4L632.8 218.5L632.9 217.7L634.4 215.3L634.5 213.1L634.0 211.6L634.7 208.5L636.1 208.2L637.7 207.7L639.1 206.5L640.2 205.9L640.9 203.9L641.7 202.3ZM583.4 118.6L583.4 118.2L584.8 118.0L586.7 118.2L588.4 117.8L587.6 119.3L587.9 120.0L587.6 120.7L586.3 120.0L585.1 119.7L584.3 119.2ZM576.6 112.7L576.5 113.4L576.9 114.9L576.9 116.1L577.6 116.6L578.1 116.0L578.7 116.1L579.0 114.5L579.0 112.8L578.2 112.1L577.2 112.8ZM581.2 82.3L582.6 81.4L583.6 81.6L583.6 82.5L583.0 83.4L582.8 84.4L581.0 84.4L581.4 83.4Z"></path></clipPath><path d="M365.8 96.7L410.8 96.7L411.7 97.4L415.8 98.2L419.7 98.8M441.0 106.4L443.6 104.8L448.7 104.8L449.7 104.2L450.6 102.0L451.1 101.4L452.4 99.9L453.8 100.1L454.7 100.7L454.7 103.4L455.2 104.2L455.8 104.6M337.2 47.2L337.2 71.6L340.4 72.1L342.9 74.7L346.1 73.0L349.3 75.9L351.7 79.3L354.9 81.6L354.7 83.9M375.5 128.2L379.4 127.9L385.4 130.4L389.9 130.4L389.9 129.6L392.6 129.6L395.1 131.7L396.6 133.9L398.0 134.5L399.2 133.1L400.8 133.1L402.0 134.6L403.8 137.1L404.4 139.0L407.6 139.7M415.5 158.9L415.5 157.7L416.3 156.3L418.4 156.3L416.8 154.4L417.5 154.4L417.5 153.4L420.4 153.4L421.8 152.3M420.4 153.4L420.3 156.6L420.8 156.6M421.8 156.9L420.3 158.7L420.1 159.0L418.9 160.1M420.1 159.0L421.4 159.8L422.6 160.7M423.4 161.3L424.3 160.1L425.9 159.9L427.4 158.4L430.0 158.1M425.9 164.5L427.2 164.6L429.1 164.7M430.4 169.4L430.5 168.0L430.9 166.9M438.5 170.7L439.3 168.3M448.3 150.3L448.4 151.8L448.2 153.1M449.0 163.3L447.1 164.6L446.3 167.3L447.3 168.8L447.9 171.1L451.0 171.1L452.1 172.5L455.1 172.3L454.7 175.1L454.6 177.8L455.8 180.4L456.2 180.4M456.2 180.4L458.3 181.0L460.7 179.3L460.4 178.3L461.7 178.8L460.7 175.7L462.7 175.9L465.6 175.1L466.0 174.0M466.0 174.0L464.9 172.8L465.2 171.5L466.7 171.1L467.5 169.0M466.0 174.0L467.2 174.3L467.8 175.9L467.3 178.4L469.1 180.2L472.8 179.3M471.8 172.8L471.5 174.3L470.4 175.9L472.8 179.3M476.8 173.0L476.1 175.9L475.8 178.6M472.8 179.3L475.2 178.3L475.8 178.6L478.6 178.8L480.6 175.9M456.2 180.4L451.4 179.6L452.1 180.6L451.0 181.4L452.1 183.9L451.2 189.0M451.2 189.0L450.0 188.4L446.5 186.2L445.2 184.3L443.4 182.6L442.6 182.5M442.6 182.5L441.0 181.7L439.3 181.7L437.0 180.0M442.6 182.5L442.1 184.7L440.4 186.5L437.8 187.8L436.7 190.3L434.9 189.2L434.6 187.8M451.2 189.0L446.5 190.5L444.9 194.0L446.5 197.4L450.3 197.5L450.2 200.0L451.8 199.9M451.8 199.9L453.2 202.5L452.7 206.2L452.1 207.5L452.7 208.5L451.9 210.7L450.6 212.1M451.9 210.7L453.2 214.0L453.5 215.6L454.5 219.5L455.6 219.5M451.8 199.9L453.5 200.0L458.7 198.1L458.7 200.8L459.9 202.3L464.0 203.8L466.5 204.4L466.8 208.5L469.9 208.7L471.2 211.6L470.2 214.5L470.0 215.1M470.0 215.1L468.6 213.6L464.3 214.1L463.0 218.6M463.0 218.6L460.3 219.5L457.5 217.8L455.6 219.5M470.0 215.1L470.5 218.3L474.1 218.7L474.5 221.5L476.3 221.5L475.8 224.3M475.8 224.3L473.7 227.3L469.4 227.2L471.0 223.9L467.3 221.5L463.0 218.6M475.8 224.3L477.3 225.3L477.1 226.9L473.9 228.7L471.0 232.2M471.0 232.2L473.6 233.5L476.8 235.2L478.1 236.7L477.7 238.6M471.0 232.2L470.0 236.3L469.7 239.0M455.6 219.5L453.5 222.4L453.8 225.8L451.4 229.3L451.1 232.8L450.6 235.4L451.4 239.0L450.3 242.6L449.4 247.3L448.4 252.0L448.2 257.8L448.1 262.8L447.1 267.9L446.0 271.4L447.4 273.5L449.5 274.2L453.6 274.9M453.4 275.6L453.4 280.5M560.2 123.6L560.7 127.4L561.5 128.8L557.8 130.9L554.6 133.1L549.5 135.0L549.5 137.4M549.5 136.8L542.2 136.8M549.5 137.4L549.5 139.6L544.2 139.6L544.2 144.0L542.5 144.8L542.5 147.5L536.1 147.5M549.5 137.4L555.7 141.4L566.3 149.3L568.7 151.5L570.2 151.2M570.2 151.2L573.0 150.1L575.4 148.5L582.6 143.9M582.6 143.9L579.4 142.2L578.5 139.3L579.3 136.5L578.6 132.4M578.6 132.4L577.8 129.0L575.4 126.0L576.7 123.8L577.2 120.3M578.6 132.4L579.9 129.7L581.9 127.1M603.7 130.0L603.5 146.4L603.5 149.8L601.9 149.8L601.9 150.6M601.9 150.6L589.1 144.0L587.5 144.8L586.2 145.4L582.6 143.9M603.5 146.4L622.6 146.4M555.7 141.4L552.8 141.4L554.6 155.6L554.9 155.9L554.4 157.2L548.5 157.2L545.9 157.9L545.0 157.1L543.8 158.4M543.8 158.4L541.7 156.3L540.1 155.4L536.9 156.4M543.8 158.4L545.1 162.3M545.1 162.3L541.4 162.0L539.3 161.8L536.6 162.3M536.5 160.4L539.3 160.0L541.3 160.7L539.3 161.0L536.6 161.2M545.1 162.3L546.9 162.6L549.0 162.3L550.1 164.6L550.6 165.9L551.2 165.6M542.1 167.7L543.4 166.4L545.4 166.2L546.4 167.7L546.9 168.6M546.9 168.6L548.2 168.8L548.5 170.4L549.8 170.1L551.2 165.6M546.9 168.6L545.0 171.2M549.8 170.1L550.1 172.2L551.4 173.0L551.4 175.2M551.2 165.6L553.5 165.2L554.6 165.6M554.6 165.6L555.9 166.7L558.9 167.0L559.1 169.6L558.3 171.4L558.4 174.1M554.6 165.6L555.1 163.3L556.3 161.8L558.1 160.8L558.7 159.7L560.2 159.4L562.3 157.9L563.7 158.2M558.9 167.0L558.9 164.6L563.4 164.4M563.4 164.4L564.2 167.0L564.4 170.4L565.3 172.5M564.8 164.6L566.0 167.8L566.0 172.3M563.7 158.2L565.0 160.7L566.9 162.3L564.8 164.6L563.4 164.4M566.9 162.3L569.2 163.4L567.9 167.7L567.7 172.0M563.7 158.2L569.0 157.4L570.1 155.4L570.2 151.2M569.2 163.4L570.0 160.5L574.5 161.3L577.8 161.7L579.4 160.8L585.2 160.2M585.2 160.2L585.1 159.0L588.3 154.9L588.4 150.0L587.5 144.8M585.2 160.2L586.8 161.8L586.2 164.3L584.6 166.9L583.0 168.8L581.5 171.9L579.6 171.2L577.5 173.0L577.0 174.9M586.8 161.8L587.6 164.7L585.9 166.4L588.3 170.2M601.9 150.6L601.9 156.9L600.1 157.2L599.3 161.3L598.4 162.0L600.1 164.6L601.4 168.3M588.3 170.2L592.3 169.4L593.9 167.8L598.2 165.2L600.1 164.6M588.3 170.2L586.7 172.5L586.7 174.3L588.7 177.3L589.4 178.8M579.1 178.6L581.5 178.8L584.7 178.8L589.4 178.8M579.1 180.7L581.5 180.7L581.5 178.8M584.7 178.8L586.5 180.2L585.7 182.3L586.7 183.4L586.5 185.5L583.8 185.8L582.6 187.1L581.2 188.6M589.4 178.8L590.0 176.7L593.2 176.7M593.2 176.7L593.2 175.2L596.3 175.1L599.5 175.7L601.9 174.1L604.0 174.3L607.3 174.1M593.2 176.7L592.0 181.8L589.4 185.5L589.1 187.9L586.5 190.2L584.4 189.7L583.0 191.5M601.4 168.3L603.5 170.2L605.7 171.9L607.3 174.1M601.4 168.3L603.5 165.7L608.2 166.9L609.9 166.7L612.8 166.7L615.4 163.4L616.7 164.9L617.8 167.0L616.3 169.6M617.8 167.0L618.4 165.2L620.0 163.0L621.3 161.8L621.9 159.2M621.9 159.2L622.7 154.6L625.3 153.1M621.9 159.2L624.2 158.2L627.6 158.9L631.4 162.1M631.4 162.1L630.4 164.6L632.4 164.6L632.9 163.8M632.4 164.6L632.0 166.2L635.6 168.3L640.4 169.4L635.6 174.3L632.4 175.1L630.8 175.9M630.8 175.9L626.8 176.8L624.4 176.5L621.1 175.2L621.0 174.9M616.3 169.6L617.9 170.6L619.5 173.5L621.0 174.9M621.0 174.9L618.6 175.6L617.9 175.6M617.9 175.6L616.3 176.2L613.1 176.4L612.8 176.7M607.3 174.1L610.7 175.2L612.8 176.7M630.8 175.9L629.2 177.8L629.2 182.3L630.1 184.9M617.9 175.6L619.5 179.6L617.9 181.8L617.8 183.9M617.8 183.9L623.7 187.1L623.9 187.9L626.3 189.8M612.8 176.7L613.6 178.8L611.4 181.3L610.9 184.5M610.9 184.5L612.3 183.9L617.8 183.9M610.9 184.5L609.9 186.6L610.2 189.4L612.8 187.6L612.3 186.2L612.3 183.9M609.9 186.6L612.3 186.2M610.2 189.4L610.9 192.7L612.8 195.6M612.8 195.6L616.2 197.4M616.2 197.4L617.9 197.6L619.4 200.8M619.4 200.8L623.5 201.2L628.2 199.2M619.4 200.8L618.6 202.0L621.0 206.4L620.0 210.0L618.4 205.6L616.3 204.9M616.2 197.4L617.0 202.1L616.3 204.9M612.8 195.6L609.8 196.0L609.0 197.3L609.3 201.6L611.2 202.0L609.9 203.9L607.0 201.3L604.0 200.3L602.4 200.5L601.9 199.9L599.0 200.3M599.0 200.3L601.9 203.3L598.7 203.3L598.7 208.5L600.9 210.8M583.1 191.9L584.9 191.8L590.0 191.8L590.7 194.0L594.7 193.5L596.4 194.0L598.4 194.0L598.5 197.7L599.0 200.3M582.2 210.2L585.1 209.8L586.2 210.5L593.1 210.5L597.7 211.5L600.9 210.8M597.1 212.0L597.1 218.2L595.5 218.2L595.5 222.9M600.9 210.8L604.0 211.1M595.5 222.9L595.5 229.1L591.3 229.6L589.8 229.4M595.5 222.9L596.8 226.3L599.6 225.1L603.0 224.6L604.5 224.3L606.5 221.9L608.3 219.7L610.6 218.5M604.0 211.1L605.1 213.3L607.8 215.6L610.6 218.5M604.0 211.1L606.7 211.3L609.8 208.0L612.2 207.5M612.2 207.5L616.2 209.3L615.8 213.0L615.8 215.8L613.6 218.8M612.2 207.5L611.8 206.2L616.3 204.9M610.6 218.5L613.6 218.8M613.6 218.8L614.7 222.2L614.7 224.8L616.2 226.3M614.7 224.8L613.1 225.0L612.8 226.3L613.6 227.2L614.9 226.3M606.7 231.2L608.5 229.6L610.4 230.3L610.2 231.9L608.5 232.9L607.3 232.2L606.7 231.2M549.2 111.0L550.2 110.7L552.8 110.9L552.3 112.6L552.2 115.1L551.5 116.2L552.2 117.9L551.5 119.8M560.6 108.1L562.3 109.0L564.5 109.4L566.1 109.7L568.5 109.8M567.5 92.4L568.5 93.2L570.1 94.7L571.1 94.7L572.7 95.7L573.7 95.8L576.6 96.7L575.6 99.6M575.6 99.6L573.2 102.2L574.6 103.1L574.1 104.6L575.6 106.6L575.4 107.2M575.6 99.6L578.6 99.8L580.1 101.0L577.8 103.2L574.6 103.1M580.1 101.0L583.0 100.8L585.4 101.8L585.4 103.6M574.8 87.6L574.7 90.0L573.0 90.9L573.2 93.0L573.7 95.8M568.9 91.8L570.3 91.7L571.4 91.6L572.7 92.2L573.2 93.0M577.3 84.1L578.6 84.3M586.3 86.3L586.5 88.3L587.0 90.2L587.5 92.6L587.1 92.9M587.1 92.9L583.1 94.0L585.5 97.3L584.3 99.8M585.5 97.3L584.3 99.8L580.1 99.8L578.6 99.8M587.1 92.9L589.5 93.4L590.5 93.8L593.6 95.7M585.5 97.3L587.5 96.7L590.6 97.6L590.8 98.8L589.2 101.1L585.4 101.8M593.6 95.7L595.5 96.3L599.6 96.5M590.8 98.8L593.6 99.2L595.5 98.4L598.9 98.0M594.8 85.1L600.0 85.3M600.0 85.3L601.1 86.2L601.7 88.9L600.6 89.8L601.3 91.5L602.1 92.9L599.6 96.5M597.5 83.3L600.0 83.9L600.0 85.3M597.2 81.5L600.1 80.7L603.5 81.2L606.1 82.3M601.1 86.2L604.3 85.6L606.1 82.3M602.5 77.3L604.0 77.0L607.3 78.1M608.4 73.6L607.3 75.2L607.3 78.1L608.1 78.7M608.1 78.7L608.6 81.3L606.1 82.3M608.6 81.3L613.0 82.5L612.8 84.3L615.8 87.3L614.4 90.2M601.3 91.5L607.0 91.3L612.5 91.9L614.4 90.2M614.4 90.2L618.6 91.1L620.5 93.8L624.4 94.9L627.7 95.5L627.1 99.2L624.7 100.6M602.1 92.9L599.6 96.5L598.9 98.0M598.9 98.0L603.3 99.4L606.1 98.3L608.6 101.6L608.6 103.9L611.0 104.4M606.1 98.3L608.0 97.9L610.1 99.0L611.5 102.0L608.6 103.9M598.9 98.0L597.3 102.2L595.9 102.6M589.2 101.1L590.0 101.9L593.6 103.1L595.9 102.6M595.9 102.6L597.7 105.2L599.8 105.8L599.3 109.0L599.2 110.1M599.8 106.4L604.3 107.5L606.7 106.5L609.3 107.3M585.2 103.8L587.9 103.8L590.0 101.9M588.7 104.4L590.7 104.4L593.9 105.0L594.5 106.4L593.1 109.5M588.7 104.4L589.2 106.4L591.6 108.8L593.1 109.5M593.9 105.0L594.5 106.4L594.2 107.8L596.0 109.2L595.5 109.5L594.5 111.0M595.5 109.5L596.4 110.9L597.1 112.9L595.5 115.1M596.4 110.9L598.0 110.2L599.2 110.1L600.3 112.0L598.7 112.4L597.1 112.9M600.3 112.0L602.7 111.7L605.3 112.0L605.7 111.3L605.2 113.1M605.7 111.3L608.3 110.7M581.3 74.9L583.1 72.3L583.0 69.9L582.8 66.7L583.0 63.7L585.9 62.2L586.7 56.9L589.1 53.2L592.4 50.4L596.0 48.9M602.1 57.7L601.4 53.7L600.9 52.1L596.0 48.9M596.0 48.9L598.7 50.1L603.5 50.1L604.8 47.3L608.2 46.0L609.9 49.0L609.8 48.9L611.5 46.9M608.0 71.0L611.2 68.2L613.9 65.2L611.5 62.4L611.4 57.2L609.9 54.8L611.5 52.6L609.1 50.7L609.8 48.9M551.8 83.8L551.2 84.5L550.3 85.1L551.7 85.7L553.3 86.0M621.1 122.0L622.1 120.5L625.2 120.4L628.7 119.9L631.3 119.8L635.3 119.8M635.3 119.8L634.0 115.7L635.3 115.1L633.5 114.1L633.2 112.4L631.6 111.7L630.0 111.7M627.6 108.0L631.6 108.4L634.0 109.5L638.0 111.1L638.0 112.4M633.2 112.4L635.6 112.1L638.0 112.4M638.0 111.1L639.6 112.1L641.4 111.0M635.6 112.1L636.4 113.4L638.0 115.5L637.3 116.7L635.3 115.1M637.3 116.7L640.4 115.1L641.8 117.4M621.1 122.1L621.8 124.7L620.9 126.7L619.7 127.2M620.9 126.7L622.4 128.6L625.6 126.8L629.2 124.9L631.3 119.8M620.9 126.7L620.4 128.5L620.2 130.1L619.5 133.5M618.3 130.4L619.4 133.6M619.5 133.8L621.1 134.1L623.5 132.7L624.4 131.8L622.7 130.1L626.0 128.9L625.6 126.8M626.0 128.9L628.2 129.4L630.8 130.8L635.1 134.1L638.1 134.3M638.1 134.3L639.5 134.5L639.9 135.2L641.0 135.2M638.1 134.3L639.3 132.6L640.4 132.7M641.4 132.8L639.9 130.9L640.1 129.0L637.2 127.2L636.2 125.6L637.5 122.3L636.2 122.0L635.3 119.8M632.0 155.8L632.7 154.1L634.8 154.1L638.8 154.8L642.0 152.1L646.8 151.5M646.8 151.5L648.6 155.4M646.8 151.5L651.6 149.8L652.7 146.4L651.9 145.3L647.7 144.8L646.2 142.6M651.9 145.3L652.9 142.7L653.4 141.8L653.8 141.4M644.9 141.8L645.5 142.0M649.9 119.5L653.5 118.1L655.3 118.3L658.5 119.2L661.6 120.8M661.6 120.8L660.6 125.1L661.1 130.1L662.5 130.2L661.0 133.0M661.0 133.0L663.6 133.8L664.8 137.5L664.1 138.6L662.2 141.0M661.0 133.0L663.6 133.8L669.7 133.0L669.9 131.0L674.6 129.3L676.2 126.9L675.5 125.5L677.4 124.9L678.3 121.0L683.5 119.7M661.6 120.8L667.3 119.9L670.1 119.5L672.1 119.8L674.9 119.0L676.0 119.1L678.2 118.3L678.2 120.7L683.5 119.7M670.1 119.5L670.1 118.3L666.4 116.4L663.5 114.5L661.2 112.1L659.6 110.3L657.4 109.2L654.8 112.0L653.2 112.0L653.2 104.8M653.2 112.0L651.1 110.6L647.6 111.1M653.2 104.8L657.4 103.6L661.2 106.0L662.8 107.8L667.5 107.4L669.4 108.8L669.3 110.7L672.5 112.6L674.2 111.9L677.1 110.2M677.1 110.2L681.3 109.9L683.7 109.0L690.1 109.2L692.0 110.6M692.0 110.6L689.2 111.9L686.6 112.7L682.1 114.3L681.5 115.6M681.5 115.6L683.5 117.3L683.5 119.7M681.5 115.6L676.5 115.3L674.6 115.5L676.6 114.1L678.9 113.6L680.5 112.8L678.4 111.7L677.1 110.2M674.6 115.5L673.1 117.9L672.1 119.8M641.0 101.6L638.8 98.8L638.3 97.4L639.6 93.8L641.5 94.9L644.9 91.1L650.8 92.6L652.7 93.4L657.4 92.6L661.9 93.0L659.6 90.6L661.2 89.8L661.2 86.3L667.7 85.2L672.8 83.9L677.3 85.6L681.3 86.1L686.6 85.4L688.3 87.6L691.7 93.0L697.2 92.6L700.1 95.5L703.4 96.3M703.4 96.3L700.9 98.0L700.9 100.6L696.5 100.4L695.4 103.8L692.2 104.8L692.0 110.6M703.4 96.3L704.2 96.3M704.2 96.3L707.3 94.9L711.4 93.0L715.1 94.7L719.5 95.2L721.1 93.6L720.3 92.6L722.0 90.2L727.3 91.9L727.5 93.4L732.5 93.7L737.4 96.1L741.0 96.4L744.5 95.5L746.7 94.0L750.6 95.0M704.2 96.3L705.5 98.4L709.2 101.0L709.2 104.4L713.4 104.9L716.4 106.2L718.0 109.3L725.1 109.4L731.7 111.4L735.8 109.8L740.0 109.4L742.9 107.4L742.1 106.0L742.9 104.6L747.1 104.0L750.4 102.2L751.7 101.6L755.4 101.6L755.7 101.0L753.5 98.8L752.3 98.8L748.7 99.4L750.6 95.0M750.6 95.0L752.3 95.7L754.8 94.0L754.6 93.4L757.0 90.4L755.9 88.7L757.3 87.6L761.6 87.1L764.9 88.2L767.9 94.1L768.1 95.1L772.9 96.9L773.0 99.4L775.9 99.4L779.5 98.0L778.3 100.4L776.9 104.6L774.0 104.9L773.8 107.8L772.9 109.8M772.9 109.8L771.8 108.8L768.7 110.7L769.2 111.7L766.9 111.1L765.5 112.8L762.9 114.5M765.7 118.7L767.3 117.7L769.3 117.2M683.5 119.7L685.1 122.0L688.2 122.9L690.0 125.0L689.6 128.1L689.7 130.4L693.3 132.4M688.2 122.9L682.1 124.3L681.9 127.2L684.3 128.6L682.7 130.9L681.9 132.8L680.3 134.5L678.7 136.3L676.6 136.3L674.9 137.9L676.0 140.2L677.4 142.4L673.8 142.6L672.8 143.6M693.3 132.4L691.9 134.8L694.9 136.4L698.3 137.1L701.0 138.6L704.7 138.9L704.8 136.5M693.3 132.4L695.1 132.2L698.3 134.6L700.9 135.7L702.1 136.3L704.8 136.5M704.8 136.5L706.0 137.4L707.4 138.4L711.0 138.2L711.1 136.5L710.3 136.5L708.4 136.0L706.2 136.9L704.8 136.5M711.1 136.5L713.9 135.0L716.4 134.4L717.5 133.8L719.5 135.8M704.7 138.9L705.3 141.0L704.5 141.9L705.8 142.7L705.5 144.4L706.2 146.3M704.7 138.9L707.4 139.6L707.5 140.8L711.6 141.4L711.4 142.7L709.7 143.6L710.1 144.9L711.4 143.6L711.9 147.6L711.4 148.6M719.5 135.8L719.1 137.8L716.0 139.6L715.1 141.0L715.3 143.1L713.2 143.1L713.0 144.8L711.9 147.6M719.5 135.8L721.7 136.9L721.7 139.8L719.9 141.7L720.1 143.2L722.0 144.4L722.5 146.2L724.1 147.4L725.6 147.2M724.0 149.2L722.1 150.2L720.1 152.2L720.2 153.6L721.5 155.9L720.9 157.7L722.4 160.2L723.2 163.3L721.8 165.6L721.5 166.2M725.6 147.2L724.0 149.2M725.6 147.2L726.6 147.9L727.2 145.8L730.1 145.6L732.4 144.3L734.5 145.1L734.3 146.4L736.6 147.3M727.2 145.8L728.6 148.1L731.3 148.7L730.4 150.4L732.1 152.0L734.3 154.9L735.7 158.1L735.9 158.6M724.0 149.2L724.6 150.6L725.9 150.6L725.6 153.9L727.2 152.8L729.2 152.5L731.3 153.9L731.4 155.7L732.8 157.5L732.1 159.1M732.1 159.1L733.6 159.8L735.9 158.6M732.1 159.1L728.6 159.3L727.6 160.4L728.4 163.4M735.9 158.6L735.8 162.4L733.2 163.6L733.7 164.9L730.9 165.6M724.0 171.9L725.6 173.2L726.7 173.1L727.2 172.3M739.3 179.0L740.8 180.9L742.7 180.7L744.5 179.8L746.2 180.0L747.1 180.0L749.3 175.3L752.0 175.6M746.4 175.0L747.2 175.9L748.4 175.3L748.1 174.4M762.4 197.3L764.1 197.4M789.6 186.5L789.6 196.9" fill="none" stroke="#b3e6dc" stroke-width=".45" stroke-linejoin="round" clip-path="url(#lc)"></path><path d="M415.7 101.3L417.8 101.0L419.8 101.1L421.6 100.0L422.6 99.9L421.6 100.9L423.2 101.8L424.7 101.9L427.1 101.3L427.9 101.8L427.5 100.8L427.2 99.0L425.0 97.4L421.9 96.8L420.3 98.0L419.7 98.8L417.8 100.2ZM422.9 111.3L424.2 111.1L425.0 110.3L425.1 109.2L424.7 107.4L425.1 105.4L426.1 104.4L427.1 103.3L426.1 102.8L424.7 103.2L423.9 103.6L422.4 105.6L423.4 105.0L423.1 106.2L422.6 108.0L422.6 109.7ZM427.5 103.2L429.5 104.1L429.8 106.2L428.8 107.4L430.4 106.7L431.2 108.8L432.4 108.1L432.4 106.4L433.0 104.4L434.9 105.8L435.2 105.2L434.6 104.0L433.2 102.8L431.1 102.6L428.7 102.2ZM429.6 111.2L431.1 111.9L432.7 111.6L434.8 110.5L436.8 109.1L435.4 109.1L434.3 109.6L432.7 109.5L431.1 110.7L430.1 110.6ZM435.4 108.2L436.7 108.3L439.1 108.3L440.7 107.8L441.2 106.6L439.9 106.9L438.3 106.9L436.0 107.5ZM642.0 101.8L644.4 101.0L646.8 101.2L648.7 102.0L648.4 104.2L646.0 104.2L645.2 105.8L644.1 106.2L645.2 108.4L647.9 109.5L647.6 111.3L649.7 113.0L648.4 114.5L649.2 115.8L649.7 119.4L647.6 120.3L645.2 120.6L643.6 119.4L642.0 118.8L641.8 117.3L642.6 115.7L642.8 113.8L641.5 111.1L639.9 109.2L639.6 107.6L638.5 106.0L639.3 104.0L640.7 102.8Z" fill="#fff"></path><defs>
<radialGradient id="gy"><stop offset="0" stop-color="#ecd443"></stop><stop offset=".45" stop-color="#e6d550" stop-opacity=".95"></stop><stop offset="1" stop-color="#d8d860" stop-opacity="0"></stop></radialGradient>
<radialGradient id="go"><stop offset="0" stop-color="#f2a82c"></stop><stop offset=".55" stop-color="#f3b33c" stop-opacity=".95"></stop><stop offset="1" stop-color="#f6c85a" stop-opacity="0"></stop></radialGradient>
<radialGradient id="gr"><stop offset="0" stop-color="#d64465"></stop><stop offset=".5" stop-color="#dc5877" stop-opacity=".95"></stop><stop offset="1" stop-color="#cf8a98" stop-opacity="0"></stop></radialGradient>
<radialGradient id="gro"><stop offset="0" stop-color="#e0452c"></stop><stop offset=".5" stop-color="#e8552f" stop-opacity=".95"></stop><stop offset="1" stop-color="#f59a3a" stop-opacity="0"></stop></radialGradient>
</defs><circle cx="405.9" cy="119.1" r="5.2" fill="url(#gy)"></circle><circle cx="427.5" cy="126.2" r="5.0" fill="url(#gy)"></circle><circle cx="549.0" cy="110.4" r="4.9" fill="url(#go)"></circle><circle cx="566.9" cy="97.3" r="4.8" fill="url(#gr)"></circle><circle cx="675.4" cy="132.9" r="4.6" fill="url(#gr)"></circle><circle cx="750.1" cy="114.9" r="4.9" fill="url(#go)"></circle><circle cx="747.3" cy="146.2" r="4.4" fill="url(#go)"></circle><circle cx="745.5" cy="144.7" r="4.7" fill="url(#gro)"></circle></svg>
<!-- map buttons -->
<div class="circ" style="left:1171.5px;top:368.8px"></div>
<svg class="abs" style="left:1176px;top:372.6px" width="8" height="8" viewBox="0 0 8 8"><path d="M4 .3L.4 3.9v3.8h2.6V5.2h2v2.5h2.6V3.9z" fill="#9a9a9a"></path></svg>
<div class="circ" style="left:1171.5px;top:395.5px"></div>
<div class="abs" style="left:1176.2px;top:403.6px;width:7.6px;height:.8px;background:#c4c4c4"></div>
<div class="abs" style="left:1179.6px;top:400.2px;width:.8px;height:7.6px;background:#c4c4c4"></div>
<div class="circ" style="left:1171.5px;top:415.1px"></div>
<div class="abs" style="left:1176.2px;top:423.2px;width:7.6px;height:.9px;background:#cbcbcb"></div>

<!-- TARGETS PANEL -->
<div class="panel" style="left:31.5px;top:445px;width:578px;height:150px"></div>
<div class="t" style="left: 42px; top: 455.66px; font-size: 10.09px; color: rgb(51, 51, 51); letter-spacing: -0.222px; -webkit-text-stroke: 0.25px rgb(51, 51, 51);">Targets</div>
<div class="hl" style="left:32.5px;top:470px;width:576px;background:#ececec"></div>
<div class="sel" style="left:36.4px;top:473.6px;width:141.4px;height:17px;border-color:#e4e4e4"></div>
<div class="abs" style="left:123.4px;top:473.6px;width:1px;height:17px;background:#e4e4e4"></div>
<div class="abs" style="left:150.4px;top:473.6px;width:1px;height:17px;background:#e4e4e4"></div>
<div class="t" style="left: 42.6px; top: 479.31px; font-size: 6.88px; color: rgb(153, 153, 153); letter-spacing: -0.006px;">Search by name...</div>
<svg class="abs" style="left:131.5px;top:476.6px" width="11" height="11" viewBox="0 0 11 11"><circle cx="4.4" cy="4.4" r="3.1" fill="none" stroke="#6e6e6e" stroke-width="1.15"></circle><path d="M6.7 6.7L10 10" stroke="#6e6e6e" stroke-width="1.5"></path></svg>
<svg class="abs" style="left:158.5px;top:476.6px" width="11" height="11" viewBox="0 0 11 11"><circle cx="4.4" cy="4.4" r="3.1" fill="none" stroke="#6e6e6e" stroke-width="1.15"></circle><path d="M6.7 6.7L10 10" stroke="#6e6e6e" stroke-width="1.5"></path><path d="M2.4 6.2L6.4 2.6" stroke="#777" stroke-width=".9"></path></svg>
<div class="t" style="left: 549.6px; top: 479.62px; font-size: 6.47px; color: rgb(68, 68, 68); letter-spacing: -0.002px;">Page</div>
<div class="sel" style="left:567.4px;top:473.6px;width:33.8px;height:19.2px;border-color:#e4e4e4"></div>
<div class="t" style="left:576.6px;top:480.2px;font-size:7.8px;color:#666">1</div>
<svg class="chev" style="left:591.6px;top:481.4px" viewBox="0 0 7 5"><path d="M1.2 1l2.3 2.5L5.8 1" fill="none" stroke="#6a6a6a" stroke-width="1.05"></path></svg>
<!-- targets table -->
<div class="abs" style="left:36.4px;top:500px;width:560px;height:21px;background:linear-gradient(#fff,#f7f7f7);border-bottom:1px solid #dedede"></div>
<div class="abs" style="left:36.4px;top:521px;width:560px;height:19.6px;background:#f8f8f8;border-bottom:1px solid #e6e6e6"></div>
<div class="abs" style="left:36.4px;top:540.6px;width:560px;height:20.2px;background:#fff;border-bottom:1px solid #e6e6e6"></div>
<div class="abs" style="left:36.4px;top:560.8px;width:560px;height:20.2px;background:#f8f8f8;border-bottom:1px solid #e6e6e6"></div>
<div class="t b" style="left: 61px; top: 508.03px; font-size: 6.74px; color: rgb(51, 51, 51); letter-spacing: -0.001px;">IP Address</div>
<div class="t b" style="left: 185.4px; top: 508.03px; font-size: 6.74px; color: rgb(51, 51, 51); letter-spacing: 0.189px;">Name</div>
<div class="t b" style="left: 479.6px; top: 508.03px; font-size: 6.74px; color: rgb(51, 51, 51); letter-spacing: -0.022px;">Value</div>
<svg class="chev" style="left:42px;top:528.4px" viewBox="0 0 7 5"><path d="M.8 1l2.7 2.6L6.2 1" fill="none" stroke="#888" stroke-width=".9"></path></svg>
<div class="t b" style="left: 61.6px; top: 527.78px; font-size: 6.84px; color: rgb(42, 47, 174); letter-spacing: -0.053px;">10.101.1.82</div>
<div class="t" style="left: 61.6px; top: 548.18px; font-size: 6.84px; color: rgb(48, 54, 180); letter-spacing: -0.053px;">10.101.1.82</div>
<div class="t" style="left: 61.6px; top: 568.18px; font-size: 6.84px; color: rgb(48, 54, 180); letter-spacing: -0.053px;">10.101.1.82</div>
<div class="t" style="left: 185.4px; top: 527.78px; font-size: 6.84px; color: rgb(68, 68, 68); letter-spacing: 0.002px;">server3dc</div>
<div class="t" style="left: 185.4px; top: 548.18px; font-size: 6.84px; color: rgb(68, 68, 68); letter-spacing: 0.002px;">server1dc</div>
<div class="t" style="left: 185.4px; top: 568.18px; font-size: 6.84px; color: rgb(68, 68, 68); letter-spacing: 0.002px;">server3dc</div>
<div class="t" style="left: 479.6px; top: 527.78px; font-size: 6.84px; color: rgb(68, 68, 68); letter-spacing: 0.078px;">Critical</div>
<div class="t" style="left: 479.6px; top: 548.18px; font-size: 6.84px; color: rgb(68, 68, 68); letter-spacing: 0.078px;">Critical</div>
<div class="t" style="left: 479.6px; top: 568.18px; font-size: 6.84px; color: rgb(68, 68, 68); letter-spacing: 0.078px;">Critical</div>
<!-- scrollbar -->
<div class="abs" style="left:598.6px;top:500px;width:10.6px;height:85px;background:#f1f1f1"></div>
<div class="abs" style="left:598.6px;top:512px;width:10.6px;height:28px;background:#c1c1c1"></div>
<svg class="abs" style="left:600.8px;top:503.6px" width="6.4" height="4.6" viewBox="0 0 7 5"><path d="M1 4l2.5-2.6L6 4" fill="none" stroke="#505050" stroke-width="1.3"></path></svg>

<!-- PORT DETAILS PANEL -->
<div class="panel" style="left:615.3px;top:445px;width:578px;height:150px"></div>
<div class="t" style="left: 626.4px; top: 455.66px; font-size: 10.09px; color: rgb(51, 51, 51); letter-spacing: -0.098px; -webkit-text-stroke: 0.25px rgb(51, 51, 51);">Port Details</div>
<div class="hl" style="left:616.3px;top:470px;width:576px;background:#ececec"></div>
<div class="abs" style="left:620.8px;top:470.6px;width:35.4px;height:43px;background:#efefef"></div>
<div class="hl" style="left:620.8px;top:484.6px;width:123px;background:#e6e6e6"></div>
<div class="hl" style="left:620.8px;top:499.2px;width:123px;background:#e6e6e6"></div>
<div class="hl" style="left:620.8px;top:513.4px;width:123px;background:#e6e6e6"></div>
<div class="t" style="left: 622.4px; top: 474.45px; font-size: 5.89px; color: rgb(85, 85, 85); letter-spacing: 0.006px;">IP Address:</div>
<div class="t" style="left: 622.4px; top: 488.93px; font-size: 6.13px; color: rgb(85, 85, 85); letter-spacing: -0.149px;">Name:</div>
<div class="t" style="left: 622.4px; top: 503.46px; font-size: 5.87px; color: rgb(85, 85, 85); letter-spacing: 0.002px;">Value:</div>
<div class="t" style="left: 658.4px; top: 474.45px; font-size: 5.89px; color: rgb(68, 68, 68); letter-spacing: -0.25px;">10.101.1.82</div>
<div class="t" style="left: 658.4px; top: 488.93px; font-size: 6.13px; color: rgb(68, 68, 68); letter-spacing: -0.001px;">IPAD~GlobexCorp-Acme-Sysl...</div>
<div class="t" style="left: 658.4px; top: 503.46px; font-size: 5.87px; color: rgb(68, 68, 68); letter-spacing: -0.051px;">Critical</div>
<div class="t" style="left: 1060.6px; top: 479.62px; font-size: 6.47px; color: rgb(68, 68, 68); letter-spacing: -0.002px;">Page</div>
<div class="sel" style="left:1078.6px;top:473.6px;width:33px;height:19.2px;border-color:#e4e4e4"></div>
<div class="t" style="left:1087.8px;top:480.2px;font-size:7.8px;color:#666">1</div>
<svg class="chev" style="left:1102.4px;top:481.4px" viewBox="0 0 7 5"><path d="M1.2 1l2.3 2.5L5.8 1" fill="none" stroke="#6a6a6a" stroke-width="1.05"></path></svg>
<div class="t" style="left: 1117.6px; top: 479.62px; font-size: 6.47px; color: rgb(68, 68, 68); letter-spacing: -0.011px;">Page Size</div>
<div class="sel" style="left:1150px;top:473.6px;width:37.6px;height:19.2px;border-color:#e4e4e4"></div>
<div class="t" style="left:1159.4px;top:480.2px;font-size:7.8px;color:#666">25</div>
<svg class="chev" style="left:1178.4px;top:481.4px" viewBox="0 0 7 5"><path d="M1.2 1l2.3 2.5L5.8 1" fill="none" stroke="#6a6a6a" stroke-width="1.05"></path></svg>
<!-- port table -->
<div class="abs" style="left:620.8px;top:514px;width:567.4px;height:20px;background:linear-gradient(#fff,#f6f6f6);border-bottom:1px solid #dedede"></div>
<div class="abs" style="left:620.8px;top:534px;width:567.4px;height:19.4px;background:#f8f8f8;border-bottom:1px solid #e6e6e6"></div>
<div class="abs" style="left:620.8px;top:553.4px;width:567.4px;height:19.2px;background:#fff;border-bottom:1px solid #e6e6e6"></div>
<div class="abs" style="left:620.8px;top:572.6px;width:567.4px;height:19.2px;background:#f8f8f8"></div>
<div class="t b" style="left: 625.4px; top: 521.33px; font-size: 6.74px; color: rgb(51, 51, 51); letter-spacing: 0.023px;">Log Time</div>
<div class="t b" style="left: 891.2px; top: 521.33px; font-size: 6.74px; color: rgb(51, 51, 51); transform: translateX(-50%); letter-spacing: -0.017px;">Attacker IP</div>
<div class="t b" style="left: 1028.3px; top: 521.33px; font-size: 6.74px; color: rgb(51, 51, 51); transform: translateX(-50%); letter-spacing: -0.011px;">Target Port</div>
<div class="t b" style="left: 1138px; top: 521.33px; font-size: 6.74px; color: rgb(51, 51, 51); transform: translateX(-50%); letter-spacing: -0.002px;">Protocol</div>
<div class="t" style="left: 625.4px; top: 540.63px; font-size: 6.94px; letter-spacing: -0.004px;">Nov 15 06:01:40 AM</div>
<div class="t" style="left: 625.4px; top: 559.71px; font-size: 6.78px; letter-spacing: 0.083px;">Nov 15 12:22:40 AM</div>
<div class="t" style="left: 625.4px; top: 579.05px; font-size: 6.9px; letter-spacing: -0.002px;">Nov 14 12:31:40 PM</div>
<div class="t" style="left: 891.6px; top: 540.63px; font-size: 6.94px; transform: translateX(-50%); letter-spacing: -0.081px;">204.79.197.203</div>
<div class="t" style="left: 891.6px; top: 559.71px; font-size: 6.78px; transform: translateX(-50%); letter-spacing: 0.005px;">204.79.197.200</div>
<div class="t" style="left: 891.4px; top: 579.05px; font-size: 6.9px; transform: translateX(-50%); letter-spacing: 0.002px;">8.253.164.249</div>
<div class="t" style="left: 1028.3px; top: 540.63px; font-size: 6.94px; transform: translateX(-50%); letter-spacing: 0.091px;">80</div>
<div class="t" style="left: 1028.3px; top: 559.71px; font-size: 6.78px; transform: translateX(-50%); letter-spacing: -0.166px;">443</div>
<div class="t" style="left: 1028.3px; top: 579.05px; font-size: 6.9px; transform: translateX(-50%); letter-spacing: 0.114px;">80</div>
<div class="t" style="left: 1138px; top: 540.63px; font-size: 6.94px; transform: translateX(-50%) scaleX(0.8968); letter-spacing: -0.28px;">TCP</div>
<div class="t" style="left: 1138px; top: 559.71px; font-size: 6.78px; transform: translateX(-50%) scaleX(0.921); letter-spacing: -0.28px;">TCP</div>
<div class="t" style="left: 1138px; top: 579.05px; font-size: 6.9px; transform: translateX(-50%) scaleX(0.9033); letter-spacing: -0.28px;">TCP</div>

<!-- page scrollbar -->
<div class="abs" style="left:1198.4px;top:32px;width:1.6px;height:553px;background:#e9e9ee"></div>
<div class="abs" style="left:1198.8px;top:32px;width:1.2px;height:446px;background:#c9c9cf"></div>


</body></html>
